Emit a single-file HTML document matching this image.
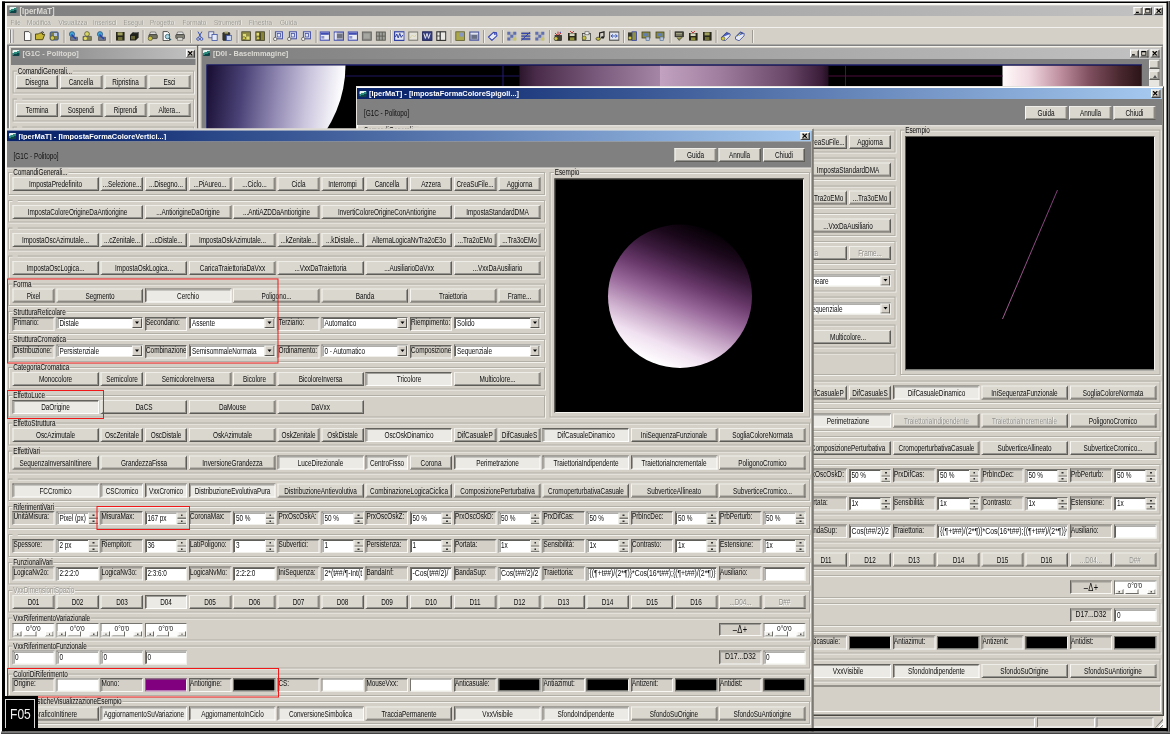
<!DOCTYPE html>
<html><head><meta charset="utf-8"><title>IperMaT</title><style>
html,body{margin:0;padding:0;background:#fff;}
body{width:1170px;height:734px;position:relative;overflow:hidden;font-family:"Liberation Sans",sans-serif;font-size:17px;color:#0c0c0c;}
div,i,b,span{box-sizing:border-box}
#c{position:absolute;left:0;top:0;width:1170px;height:734px;overflow:hidden}
#w{position:absolute;left:0;top:0;width:2340px;height:1468px;transform:scale(.5);transform-origin:0 0;filter:blur(1.1px)}
#w>div{position:absolute;white-space:nowrap}
i,b{display:block;font-style:normal;font-weight:normal}
.t{display:inline-block;transform:scaleX(.755);transform-origin:50% 50%;letter-spacing:-0.1px}
.b{background:#dad7cf;text-align:center;line-height:25.2px;border:2px solid;border-color:#eeede8 #5e5c56 #5e5c56 #f6f5f0;box-shadow:inset -2px -2px 0 #96948e;overflow:hidden}
.b .t{position:absolute;left:50%;top:0;transform:translateX(-50%) scaleX(.755)}
.bp{background:#eceae5;border-color:#64625c #fdfdfb #fdfdfb #64625c;box-shadow:inset 2px 2px 0 #a09e98;line-height:26.8px}
.bd{color:#8e8c86;text-shadow:1.2px 1.2px 0 #fff}
.l{background:#d4d0c8;border:2px solid;border-color:#66645e #f8f7f3 #f8f7f3 #66645e;box-shadow:inset 2px 2px 0 #9c9a94;line-height:18.8px;padding-left:0;overflow:hidden}
.l .t,.e .t,.gl .t,.hd .t{transform-origin:0 50%}
.lc{text-align:center}
.lc .t{transform-origin:50% 50%}
.e{background:#fff;border:2px solid;border-color:#76746e #f0efea #f0efea #76746e;box-shadow:inset 2px 2px 0 #605e58;line-height:21.2px;padding-left:3.6px;overflow:hidden}
.dd{position:absolute;right:0;top:0;width:19.6px;bottom:0;background:#d4d0c8;border:2px solid;border-color:#f4f3ee #55534e #55534e #f4f3ee}
.dd:after{content:"";position:absolute;left:4px;top:5.6px;border:4.4px solid transparent;border-top:5.2px solid #000;border-bottom:0}
.sp{position:absolute;right:0;top:0;width:19.2px;bottom:0;background:#d8d5cd;border-left:2px solid #f4f3ee}
.sp b{position:absolute;left:0;right:0;top:45%;height:2.4px;background:#77756f;box-shadow:0 10.8px 0 #77756f,0 2.4px 0 #f4f3ee}
.sp:before,.sp:after{content:"";position:absolute;left:6.8px;width:3.6px;height:2.8px;background:#333}
.sp:before{top:4px}.sp:after{bottom:4.4px}
.sw{border:2px solid;border-color:#76746e #f0efea #f0efea #76746e}
.sl{background:#fff;border:2px solid;border-color:#76746e #f0efea #f0efea #76746e;box-shadow:inset 2px 2px 0 #55534e;text-align:center;line-height:15.2px;overflow:hidden;box-shadow:none}
.sl .t{font-size:16px;transform:scaleX(.82);position:relative;top:0.2px}
.sb{position:absolute;left:0;right:0;bottom:0;height:10.8px;background:#fcfcfa}
.sb b{position:absolute;top:0;height:10.8px;background:#eeede8;border:2px solid;border-color:#fff #6e6c66 #6e6c66 #fff}
.sb .a1{left:0;width:16.8px}.sb .a2{right:0;width:16.8px}.sb .th{left:20px;width:26.8px;background:#fbfbf9}
.sb .a1:after,.sb .a2:after{content:"";position:absolute;left:5.2px;top:2.4px;width:2.8px;height:2.8px;background:#555}
.g{border:2px solid #b2afa7;box-shadow:2px 2px 0 #f2f1ec,inset 2px 2px 0 #f2f1ec;background:#d4d0c8}
.gl{position:absolute;left:6.8px;top:-8.8px;background:#d4d0c8;line-height:16px;padding:0 2px;height:16px;transform:scaleX(.75);transform-origin:0 50%}
.gl .t{transform:none!important}
.ge{width:14px;height:6px;top:-4px}
.gd{color:#9a9892;text-shadow:1.2px 1.2px 0 #fff}
.dlg{background:#d4d0c8;border:2px solid;border-color:#e4e2dc #48463f #48463f #e4e2dc;box-shadow:inset 2px 2px 0 #fff,inset -2px -2px 0 #8a8882}
.tb{background:linear-gradient(90deg,#0a246a 0,#0c276e 8%,#a6caf0 100%);overflow:hidden}
.itb{background:linear-gradient(90deg,#808080 0,#828282 6%,#c2c2c2 100%);overflow:hidden}
.tt{position:absolute;left:24px;top:0;line-height:21.2px;color:#fff;font-weight:bold;font-size:16px;transform:scaleX(.925);transform-origin:0 50%}
.ticon{position:absolute;left:4.8px;top:5.2px;width:14px;height:12px;background:linear-gradient(160deg,#e4f2ee 0 35%,#2a8a7c 36% 60%,#0c4448 61%);border-radius:2px}
.xb{position:absolute;right:2.8px;top:2.4px;width:18.8px;height:16.8px;background:#d4d0c8;border:2px solid;border-color:#fff #404040 #404040 #fff;box-shadow:inset -2px -2px 0 #8a8882}
.xb svg,.cb svg{position:absolute;left:0.4px;top:0.2px}
.cb{background:#d4d0c8;border:2px solid;border-color:#fff #404040 #404040 #fff;box-shadow:inset -2px -2px 0 #8a8882}
.hd{background:#808080}
.cv{background:#000;border:2px solid;border-color:#5a5852 #f4f3ee #f4f3ee #5a5852;overflow:hidden}
.ball{position:absolute;left:105.2px;top:90.4px;width:288px;height:287.2px;border-radius:50%;background:linear-gradient(22deg,#fff 11.6%,#f0e0f0 23.1%,#c8a8c8 34.6%,#9a6a9c 46.2%,#6a3a6c 57.7%,#3a1a3c 69.2%,#1a081a 79.2%,#050005 88.4%)}
.mn{color:#98968f;text-shadow:1.2px 1.2px 0 #f4f4f0;font-size:15.6px;line-height:18px}
.mn .t{transform-origin:0 50%;transform:scaleX(.835)}
.ic{border-radius:3px;opacity:.92}
</style></head><body><div id="c"><div id="w">
<div class="" style="left:9.6px;top:5.8px;width:2323.2px;height:1450.4px;background:#f8f7f3"></div>
<div class="" style="left:13.6px;top:10.8px;width:2312.8px;height:1446px;background:#d4d0c8"></div>
<div class="itb" style="left:14px;top:11.2px;width:2312px;height:21.2px;"><i class="ticon" style="left:4.8px;top:3.2px"></i><span class="tt" style="color:#dcdad4;left:25.2px;font-size:16.8px;transform:scaleX(.93)">[IperMaT]</span></div>
<div class="cb" style="left:2267.2px;top:13.6px;width:18px;height:16px;"><svg viewBox="0 0 8 7" width="12.8" height="11.2"><path d="M1.2 5.4H4.8" stroke="#000" stroke-width="1.5"/></svg></div>
<div class="cb" style="left:2286.4px;top:13.6px;width:18px;height:16px;"><svg viewBox="0 0 8 7" width="12.8" height="11.2"><path d="M1.4 1H6.6V6H1.4Z" stroke="#000" stroke-width=".9" fill="none"/><path d="M1.4 1.4H6.6" stroke="#000" stroke-width="1.5"/></svg></div>
<div class="cb" style="left:2308.4px;top:13.6px;width:18px;height:16px;"><svg viewBox="0 0 8 7" width="12.8" height="11.2"><path d="M1.4 0.9L6.6 6.1M6.6 0.9L1.4 6.1" stroke="#000" stroke-width="1.45"/></svg></div>
<div class="mn" style="left:21.4px;top:34.8px;width:80px;height:18px;"><span class="t" style="">File</span></div>
<div class="mn" style="left:54px;top:34.8px;width:80px;height:18px;"><span class="t" style="">Modifica</span></div>
<div class="mn" style="left:117px;top:34.8px;width:80px;height:18px;"><span class="t" style="">Visualizza</span></div>
<div class="mn" style="left:186px;top:34.8px;width:80px;height:18px;"><span class="t" style="">Inserisci</span></div>
<div class="mn" style="left:247.4px;top:34.8px;width:80px;height:18px;"><span class="t" style="">Esegui</span></div>
<div class="mn" style="left:300px;top:34.8px;width:80px;height:18px;"><span class="t" style="">Progetto</span></div>
<div class="mn" style="left:365.2px;top:34.8px;width:80px;height:18px;"><span class="t" style="">Formato</span></div>
<div class="mn" style="left:428px;top:34.8px;width:80px;height:18px;"><span class="t" style="">Strumenti</span></div>
<div class="mn" style="left:498px;top:34.8px;width:80px;height:18px;"><span class="t" style="">Finestra</span></div>
<div class="mn" style="left:560px;top:34.8px;width:80px;height:18px;"><span class="t" style="">Guida</span></div>
<div class="" style="left:14px;top:54px;width:2312px;height:2px;background:#fff;opacity:.7"></div>
<div class="" style="left:18.4px;top:59.2px;width:2px;height:26.8px;background:#fff;box-shadow:2px 0 0 #808080"></div>
<div class="" style="left:23.2px;top:59.2px;width:2px;height:26.8px;background:#fff;box-shadow:2px 0 0 #808080"></div>
<div class="" style="left:127.2px;top:60px;width:2px;height:26px;background:#8c8a84;box-shadow:2px 0 0 #f8f8f4;opacity:.75"></div>
<div class="" style="left:219.2px;top:60px;width:2px;height:26px;background:#8c8a84;box-shadow:2px 0 0 #f8f8f4;opacity:.75"></div>
<div class="" style="left:284.8px;top:60px;width:2px;height:26px;background:#8c8a84;box-shadow:2px 0 0 #f8f8f4;opacity:.75"></div>
<div class="" style="left:380px;top:60px;width:2px;height:26px;background:#8c8a84;box-shadow:2px 0 0 #f8f8f4;opacity:.75"></div>
<div class="" style="left:473px;top:60px;width:2px;height:26px;background:#8c8a84;box-shadow:2px 0 0 #f8f8f4;opacity:.75"></div>
<div class="" style="left:538px;top:60px;width:2px;height:26px;background:#8c8a84;box-shadow:2px 0 0 #f8f8f4;opacity:.75"></div>
<div class="" style="left:631.2px;top:60px;width:2px;height:26px;background:#8c8a84;box-shadow:2px 0 0 #f8f8f4;opacity:.75"></div>
<div class="" style="left:780px;top:60px;width:2px;height:26px;background:#8c8a84;box-shadow:2px 0 0 #f8f8f4;opacity:.75"></div>
<div class="" style="left:900.8px;top:60px;width:2px;height:26px;background:#8c8a84;box-shadow:2px 0 0 #f8f8f4;opacity:.75"></div>
<div class="" style="left:966px;top:60px;width:2px;height:26px;background:#8c8a84;box-shadow:2px 0 0 #f8f8f4;opacity:.75"></div>
<div class="" style="left:1004px;top:60px;width:2px;height:26px;background:#8c8a84;box-shadow:2px 0 0 #f8f8f4;opacity:.75"></div>
<div class="" style="left:1098px;top:60px;width:2px;height:26px;background:#8c8a84;box-shadow:2px 0 0 #f8f8f4;opacity:.75"></div>
<div class="" style="left:1246px;top:60px;width:2px;height:26px;background:#8c8a84;box-shadow:2px 0 0 #f8f8f4;opacity:.75"></div>
<div class="" style="left:1339.2px;top:60px;width:2px;height:26px;background:#8c8a84;box-shadow:2px 0 0 #f8f8f4;opacity:.75"></div>
<div class="" style="left:1431.2px;top:60px;width:2px;height:26px;background:#8c8a84;box-shadow:2px 0 0 #f8f8f4;opacity:.75"></div>
<div class="" style="left:1504px;top:60px;width:2px;height:26px;background:#8c8a84;box-shadow:2px 0 0 #f8f8f4;opacity:.75"></div>
<div style="left:44.8px;top:61.6px;width:21.2px;height:20.4px"><svg viewBox="0 0 10.6 10.2" width="21.2" height="20.4" style="display:block;opacity:.93"><path d="M2 .6h4.4l2 2v7H2z" fill="#fff" stroke="#333" stroke-width=".9"/></svg></div>
<div style="left:70px;top:61.6px;width:21.2px;height:20.4px"><svg viewBox="0 0 10.6 10.2" width="21.2" height="20.4" style="display:block;opacity:.93"><path d="M.5 3h3l1-1h3v1.5h2.2l-2 5.2H.5z" fill="#c4b428" stroke="#3a3400" stroke-width=".9"/><path d="M6 1.5l2-.8 1 1.6" stroke="#222" fill="none" stroke-width=".8"/></svg></div>
<div style="left:98px;top:61.6px;width:21.2px;height:20.4px"><svg viewBox="0 0 10.6 10.2" width="21.2" height="20.4" style="display:block;opacity:.93"><rect x="1.2" y="1" width="8" height="8" rx="1" fill="#7c7a34" stroke="#2c4a90" stroke-width="1"/><circle cx="3.4" cy="7" r="2.2" fill="#d0c838" stroke="#333" stroke-width=".6"/><rect x="5" y="2" width="3" height="3" fill="#b8c8e8"/></svg></div>
<div style="left:136px;top:61.6px;width:21.2px;height:20.4px"><svg viewBox="0 0 10.6 10.2" width="21.2" height="20.4" style="display:block;opacity:.93"><circle cx="4" cy="3.2" r="2.6" fill="#3aa0d8" stroke="#204870" stroke-width=".7"/><path d="M2.5 6.2h7v3.2h-7z" fill="#68708c" stroke="#333" stroke-width=".6"/><path d="M3.5 3.5l4.5 4.5" stroke="#1838b0" stroke-width="1.5"/></svg></div>
<div style="left:164px;top:61.6px;width:21.2px;height:20.4px"><svg viewBox="0 0 10.6 10.2" width="21.2" height="20.4" style="display:block;opacity:.93"><circle cx="5" cy="3" r="2.4" fill="#d8d860" stroke="#404020" stroke-width=".7"/><path d="M1 5.4h8.4v4h-8.4z" fill="#7c7c4c" stroke="#333" stroke-width=".6"/><circle cx="3.4" cy="7.4" r="1.6" fill="#e8e060"/></svg></div>
<div style="left:192px;top:61.6px;width:21.2px;height:20.4px"><svg viewBox="0 0 10.6 10.2" width="21.2" height="20.4" style="display:block;opacity:.93"><circle cx="4" cy="3.2" r="2.6" fill="#3aa0d8" stroke="#204870" stroke-width=".7"/><path d="M2.5 6.2h7v3.2h-7z" fill="#68708c" stroke="#333" stroke-width=".6"/><path d="M3.5 3.5l4.5 4.5" stroke="#1838b0" stroke-width="1.5"/></svg></div>
<div style="left:230px;top:61.6px;width:21.2px;height:20.4px"><svg viewBox="0 0 10.6 10.2" width="21.2" height="20.4" style="display:block;opacity:.93"><rect x="1" y="1" width="8.6" height="8.6" fill="#1c1c10"/><rect x="2.6" y="1.4" width="5" height="3" fill="#9c9c54"/><rect x="3" y="6" width="4.4" height="3.2" fill="#68682c"/></svg></div>
<div style="left:258px;top:61.6px;width:21.2px;height:20.4px"><svg viewBox="0 0 10.6 10.2" width="21.2" height="20.4" style="display:block;opacity:.93"><path d="M1 4l3-3h5.6v5.6l-3 3H1z" fill="#141410"/><path d="M2 5h4v3.4H2z" fill="#5c5c2c"/><path d="M4.4 1.6h4.4" stroke="#888" stroke-width=".8"/></svg></div>
<div style="left:295.2px;top:61.6px;width:21.2px;height:20.4px"><svg viewBox="0 0 10.6 10.2" width="21.2" height="20.4" style="display:block;opacity:.93"><path d="M3 1h5l1 2.6h-7z" fill="#e0e0e0" stroke="#444" stroke-width=".6"/><rect x="1.4" y="3.6" width="8.4" height="4" rx=".8" fill="#6c6c58" stroke="#222" stroke-width=".7"/><circle cx="2.8" cy="7.4" r="2.2" fill="#c8c030" stroke="#333" stroke-width=".6"/></svg></div>
<div style="left:323.2px;top:61.6px;width:21.2px;height:20.4px"><svg viewBox="0 0 10.6 10.2" width="21.2" height="20.4" style="display:block;opacity:.93"><path d="M1.6 .6h4.4l2 2v7H1.6z" fill="#fff" stroke="#333" stroke-width=".9"/><circle cx="6" cy="5.6" r="2.2" fill="#a8d8e8" stroke="#205060" stroke-width=".8"/><path d="M7.6 7.2l2 2" stroke="#205060" stroke-width="1.2"/></svg></div>
<div style="left:350px;top:61.6px;width:21.2px;height:20.4px"><svg viewBox="0 0 10.6 10.2" width="21.2" height="20.4" style="display:block;opacity:.93"><path d="M2.6 1h5l1 2.6h-7z" fill="#e8e8e8" stroke="#444" stroke-width=".6"/><rect x=".8" y="3.6" width="8.8" height="4" rx=".8" fill="#7c7c70" stroke="#222" stroke-width=".7"/><rect x="2.4" y="6.6" width="5.4" height="2.6" fill="#d8d8d0" stroke="#444" stroke-width=".5"/></svg></div>
<div style="left:391.2px;top:61.6px;width:21.2px;height:20.4px"><svg viewBox="0 0 10.6 10.2" width="21.2" height="20.4" style="display:block;opacity:.93"><path d="M2.4 .6l3.4 6M6.4 .6L3 6.6" stroke="#3048b0" stroke-width="1"/><circle cx="2.6" cy="8" r="1.4" fill="none" stroke="#3048b0" stroke-width=".9"/><circle cx="6" cy="8" r="1.4" fill="none" stroke="#3048b0" stroke-width=".9"/></svg></div>
<div style="left:416px;top:61.6px;width:21.2px;height:20.4px"><svg viewBox="0 0 10.6 10.2" width="21.2" height="20.4" style="display:block;opacity:.93"><rect x=".8" y=".8" width="5" height="6" fill="#e8ecf8" stroke="#404880" stroke-width=".8"/><rect x="4" y="3.4" width="5.2" height="6" fill="#e8ecf8" stroke="#3048a0" stroke-width=".8"/></svg></div>
<div style="left:444px;top:61.6px;width:21.2px;height:20.4px"><svg viewBox="0 0 10.6 10.2" width="21.2" height="20.4" style="display:block;opacity:.93"><rect x=".8" y="1.6" width="7" height="7.8" rx=".6" fill="#2c2c24" stroke="#111" stroke-width=".6"/><rect x="2.6" y=".6" width="3.4" height="2" fill="#a0a060"/><rect x="4.4" y="4.6" width="5" height="5" fill="#c8d4f0" stroke="#3048a0" stroke-width=".7"/></svg></div>
<div style="left:482px;top:61.6px;width:21.2px;height:20.4px"><svg viewBox="0 0 10.6 10.2" width="21.2" height="20.4" style="display:block;opacity:.93"><rect x=".8" y=".8" width="8.6" height="8.6" fill="#8c8838" stroke="#34341c" stroke-width=".8"/><path d="M2 3h3v3H2zM5.4 5.4h3v3h-3z" fill="#e0dc70"/><circle cx="3" cy="7.2" r="1.6" fill="#d8d040" stroke="#333" stroke-width=".5"/></svg></div>
<div style="left:510px;top:61.6px;width:21.2px;height:20.4px"><svg viewBox="0 0 10.6 10.2" width="21.2" height="20.4" style="display:block;opacity:.93"><rect x=".8" y=".8" width="8.6" height="8.6" fill="#84802c" stroke="#34341c" stroke-width=".8"/><path d="M5 1.4v7.6" stroke="#222" stroke-width="1.4"/><path d="M1.6 2h2.6v2.6H1.6z" fill="#e0dc70"/><circle cx="3" cy="7.2" r="1.6" fill="#d8d040" stroke="#333" stroke-width=".5"/></svg></div>
<div style="left:546px;top:61.6px;width:21.2px;height:20.4px"><svg viewBox="0 0 10.6 10.2" width="21.2" height="20.4" style="display:block;opacity:.93"><rect x="2.4" y=".8" width="7" height="7" fill="#e4e8f4" stroke="#3844a0" stroke-width="1"/><rect x="4.2" y="2.6" width="3.4" height="3.4" fill="none" stroke="#3844a0" stroke-width=".8"/><circle cx="2.2" cy="8" r="1.7" fill="#f4f4f4" stroke="#444" stroke-width=".7"/></svg></div>
<div style="left:574px;top:61.6px;width:21.2px;height:20.4px"><svg viewBox="0 0 10.6 10.2" width="21.2" height="20.4" style="display:block;opacity:.93"><rect x="2.4" y=".8" width="7" height="7" fill="#e4e8f4" stroke="#3844a0" stroke-width="1"/><rect x="4.2" y="2.6" width="3.4" height="3.4" fill="none" stroke="#3844a0" stroke-width=".8"/><circle cx="2.2" cy="8" r="1.7" fill="#f4f4f4" stroke="#444" stroke-width=".7"/></svg></div>
<div style="left:602px;top:61.6px;width:21.2px;height:20.4px"><svg viewBox="0 0 10.6 10.2" width="21.2" height="20.4" style="display:block;opacity:.93"><rect x="2.4" y=".8" width="7" height="7" fill="#e4e8f4" stroke="#3844a0" stroke-width="1"/><rect x="4.2" y="2.6" width="3.4" height="3.4" fill="none" stroke="#3844a0" stroke-width=".8"/><circle cx="2.2" cy="8" r="1.7" fill="#f4f4f4" stroke="#444" stroke-width=".7"/></svg></div>
<div style="left:639.2px;top:61.6px;width:21.2px;height:20.4px"><svg viewBox="0 0 10.6 10.2" width="21.2" height="20.4" style="display:block;opacity:.93"><rect x=".6" y="1" width="9.4" height="8.2" fill="#eceff8" stroke="#3844b0" stroke-width="1.1"/><rect x="1.2" y="1.6" width="8.2" height="2.2" fill="#3844b0"/><rect x="1.8" y="5" width="3" height="2.6" fill="#8890c8"/></svg></div>
<div style="left:667.2px;top:61.6px;width:21.2px;height:20.4px"><svg viewBox="0 0 10.6 10.2" width="21.2" height="20.4" style="display:block;opacity:.93"><rect x=".6" y="1" width="9.4" height="8.2" fill="#a4a8b8" stroke="#3844b0" stroke-width="1.1"/><rect x="3.4" y="3" width="5.6" height="4" fill="#686c7c"/><rect x="1.2" y="1.6" width="2" height="7" fill="#e8ecf8"/></svg></div>
<div style="left:695.2px;top:61.6px;width:21.2px;height:20.4px"><svg viewBox="0 0 10.6 10.2" width="21.2" height="20.4" style="display:block;opacity:.93"><rect x=".6" y="1" width="9.4" height="8.2" fill="#eceff8" stroke="#3844b0" stroke-width="1.1"/><rect x="1.2" y="1.6" width="8.2" height="2.2" fill="#3844b0"/><rect x="1.8" y="5" width="3" height="2.6" fill="#8890c8"/></svg></div>
<div style="left:723.2px;top:61.6px;width:21.2px;height:20.4px"><svg viewBox="0 0 10.6 10.2" width="21.2" height="20.4" style="display:block;opacity:.93"><rect x=".8" y="1" width="9" height="8.2" fill="#8c8c88" stroke="#5c5c58" stroke-width="1"/><rect x="2.4" y="2.6" width="5.8" height="5" fill="#a4a4a0"/></svg></div>
<div style="left:751.2px;top:61.6px;width:21.2px;height:20.4px"><svg viewBox="0 0 10.6 10.2" width="21.2" height="20.4" style="display:block;opacity:.93"><rect x=".8" y="1" width="9" height="8.2" fill="#9c9c98" stroke="#54544c" stroke-width="1"/><path d="M.8 5.1h9M3.8 1v8.2M6.8 1v8.2" stroke="#54544c" stroke-width=".9"/></svg></div>
<div style="left:788px;top:61.6px;width:21.2px;height:20.4px"><svg viewBox="0 0 10.6 10.2" width="21.2" height="20.4" style="display:block;opacity:.93"><rect x=".6" y=".8" width="9.6" height="8.6" fill="#e4e8f4" stroke="#2838a0" stroke-width="1.2"/><path d="M1.4 6l1.4-3 1.4 4 1.6-4.6 1.4 4 1.6-2.4" stroke="#2838a0" stroke-width="1" fill="none"/></svg></div>
<div style="left:816px;top:61.6px;width:21.2px;height:20.4px"><svg viewBox="0 0 10.6 10.2" width="21.2" height="20.4" style="display:block;opacity:.93"><rect x=".8" y="1" width="9" height="8.2" fill="#e8e6dc" stroke="#6c6c64" stroke-width="1"/><path d="M2 7l2.4-3 2 2 1.8-2.4" stroke="#d8d4a0" stroke-width="1" fill="none"/></svg></div>
<div style="left:844px;top:61.6px;width:21.2px;height:20.4px"><svg viewBox="0 0 10.6 10.2" width="21.2" height="20.4" style="display:block;opacity:.93"><rect x=".6" y=".8" width="9.6" height="8.6" fill="#28347c" stroke="#181c50" stroke-width="1"/><path d="M1.8 2.4l1.6 5 1.6-5 1.6 5 1.6-5" stroke="#e8e8f0" stroke-width="1" fill="none"/></svg></div>
<div style="left:872px;top:61.6px;width:21.2px;height:20.4px"><svg viewBox="0 0 10.6 10.2" width="21.2" height="20.4" style="display:block;opacity:.93"><rect x=".8" y=".8" width="9" height="8.6" fill="#ecebe6" stroke="#222" stroke-width="1.1"/><path d="M4.2 .8v8.6" stroke="#222" stroke-width="1.2"/><path d="M.8 5h3.4" stroke="#222" stroke-width=".7"/></svg></div>
<div style="left:910px;top:61.6px;width:21.2px;height:20.4px"><svg viewBox="0 0 10.6 10.2" width="21.2" height="20.4" style="display:block;opacity:.93"><rect x=".8" y=".8" width="8.6" height="8.6" fill="#a8a444" stroke="#54541c" stroke-width=".8"/><rect x="4.6" y="1.6" width="4" height="4" fill="#8494c0"/></svg></div>
<div style="left:938px;top:61.6px;width:21.2px;height:20.4px"><svg viewBox="0 0 10.6 10.2" width="21.2" height="20.4" style="display:block;opacity:.93"><rect x=".8" y="1" width="9" height="8.2" fill="#a0a4b4" stroke="#4450a0" stroke-width="1.1"/><rect x="2.6" y="4" width="5.4" height="3.8" fill="#606880"/><rect x="1.6" y="1.8" width="7.4" height="1.6" fill="#dfe3f4"/></svg></div>
<div style="left:975.2px;top:61.6px;width:21.2px;height:20.4px"><svg viewBox="0 0 10.6 10.2" width="21.2" height="20.4" style="display:block;opacity:.93"><path d="M1 6l5-4.6 3 .4.4 3L4.4 9.4z" fill="#e8ecf8" stroke="#2c3cb0" stroke-width="1.1"/><circle cx="7.4" cy="3" r=".9" fill="#2c3cb0"/></svg></div>
<div style="left:1012.8px;top:61.6px;width:21.2px;height:20.4px"><svg viewBox="0 0 10.6 10.2" width="21.2" height="20.4" style="display:block;opacity:.93"><rect x=".8" y=".8" width="9" height="8.8" fill="#bcbcb8"/><path d="M.8 .8h3v3h-3zM6.8 .8h3v3h-3zM3.8 3.8h3v3h-3zM.8 6.6h3v3h-3z" fill="#5868b0"/><path d="M6.8 6.6h3v3h-3z" fill="#c8c460"/></svg></div>
<div style="left:1040.8px;top:61.6px;width:21.2px;height:20.4px"><svg viewBox="0 0 10.6 10.2" width="21.2" height="20.4" style="display:block;opacity:.93"><rect x=".8" y=".8" width="9" height="8.8" fill="#a4a4a0"/><path d="M.8 2.4h9M.8 5.2h9M.8 8h9" stroke="#2c3ca8" stroke-width="1.3"/><path d="M1 9.4L9.6 1" stroke="#2c3ca8" stroke-width="1"/></svg></div>
<div style="left:1068.8px;top:61.6px;width:21.2px;height:20.4px"><svg viewBox="0 0 10.6 10.2" width="21.2" height="20.4" style="display:block;opacity:.93"><rect x=".8" y=".8" width="9" height="8.8" fill="#bcbcb8"/><path d="M.8 .8h3v3h-3zM6.8 .8h3v3h-3zM3.8 3.8h3v3h-3zM.8 6.6h3v3h-3z" fill="#5868b0"/><path d="M6.8 6.6h3v3h-3z" fill="#c8c460"/></svg></div>
<div style="left:1106px;top:61.6px;width:21.2px;height:20.4px"><svg viewBox="0 0 10.6 10.2" width="21.2" height="20.4" style="display:block;opacity:.93"><path d="M2 2l3 3 3-3M5 .6v4" stroke="#c02828" stroke-width="1" fill="none"/><rect x="2" y="4.4" width="6.6" height="5.2" fill="#38382c" stroke="#111" stroke-width=".6"/><circle cx="3" cy="7.6" r="1.9" fill="#d0c838" stroke="#333" stroke-width=".6"/><path d="M6.4 2l1.6-1" stroke="#2838a8" stroke-width="1"/></svg></div>
<div style="left:1134px;top:61.6px;width:21.2px;height:20.4px"><svg viewBox="0 0 10.6 10.2" width="21.2" height="20.4" style="display:block;opacity:.93"><rect x="1" y="2" width="8.6" height="7.6" fill="#1c1c10"/><rect x="2.6" y="2.4" width="5" height="2.6" fill="#d8d8c0"/><rect x="3" y="6.4" width="4.4" height="3" fill="#8c8c30"/><path d="M3 0l2 2 2-2" stroke="#c03030" stroke-width="1" fill="none"/></svg></div>
<div style="left:1162px;top:61.6px;width:21.2px;height:20.4px"><svg viewBox="0 0 10.6 10.2" width="21.2" height="20.4" style="display:block;opacity:.93"><rect x="1.4" y="2.4" width="8.2" height="7" fill="#dcdcd0" stroke="#333" stroke-width=".8"/><rect x="4" y=".8" width="4" height="3" fill="#f4f4f4" stroke="#444" stroke-width=".6"/><circle cx="3.2" cy="7" r="2" fill="#c8c030" stroke="#333" stroke-width=".6"/></svg></div>
<div style="left:1190px;top:61.6px;width:21.2px;height:20.4px"><svg viewBox="0 0 10.6 10.2" width="21.2" height="20.4" style="display:block;opacity:.93"><path d="M4.6 7.6V2l4.4-1.2V6" stroke="#111" stroke-width="1.2" fill="none"/><ellipse cx="3.2" cy="7.8" rx="2.2" ry="1.6" fill="#c8c030" stroke="#222" stroke-width=".7"/><ellipse cx="7.6" cy="6.4" rx="1.6" ry="1.2" fill="#111"/></svg></div>
<div style="left:1218px;top:61.6px;width:21.2px;height:20.4px"><svg viewBox="0 0 10.6 10.2" width="21.2" height="20.4" style="display:block;opacity:.93"><rect x=".6" y="1" width="9.4" height="8.2" fill="#e4e8f4" stroke="#333" stroke-width="1"/><path d="M2 5h6M4 3.4l-2 1.6 2 1.6M6.4 3.4l2 1.6-2 1.6" stroke="#2848b0" stroke-width=".9" fill="none"/></svg></div>
<div style="left:1254px;top:61.6px;width:21.2px;height:20.4px"><svg viewBox="0 0 10.6 10.2" width="21.2" height="20.4" style="display:block;opacity:.93"><rect x="1" y="1.4" width="4.6" height="8" fill="#2c2c20"/><rect x="5" y=".8" width="4.6" height="8.6" fill="#8c8c34" stroke="#2838a0" stroke-width=".8"/><circle cx="3" cy="7" r="1.8" fill="#d0c838" stroke="#333" stroke-width=".5"/></svg></div>
<div style="left:1282px;top:61.6px;width:21.2px;height:20.4px"><svg viewBox="0 0 10.6 10.2" width="21.2" height="20.4" style="display:block;opacity:.93"><rect x="1" y="1" width="8" height="6" fill="#8c8c30" stroke="#34341c" stroke-width=".8"/><rect x="2.4" y="2.2" width="5" height="3" fill="#5878b0"/><rect x="5" y="6" width="3.4" height="3.6" fill="#b8c4d8" stroke="#406090" stroke-width=".6"/></svg></div>
<div style="left:1310px;top:61.6px;width:21.2px;height:20.4px"><svg viewBox="0 0 10.6 10.2" width="21.2" height="20.4" style="display:block;opacity:.93"><rect x="1" y="1" width="8" height="6" fill="#8c8c30" stroke="#34341c" stroke-width=".8"/><rect x="2.4" y="2.2" width="5" height="3" fill="#5878b0"/><rect x="5" y="6" width="3.4" height="3.6" fill="#b8c4d8" stroke="#406090" stroke-width=".6"/></svg></div>
<div style="left:1348px;top:61.6px;width:21.2px;height:20.4px"><svg viewBox="0 0 10.6 10.2" width="21.2" height="20.4" style="display:block;opacity:.93"><rect x="1" y=".8" width="8.6" height="5" fill="#3c3c30" stroke="#111" stroke-width=".6"/><path d="M2 2.4h6M2 4h6" stroke="#c8c8a0" stroke-width=".8"/><path d="M3 6.4l2 3 3.6-3.4" fill="#8c8c34" stroke="#333" stroke-width=".7"/></svg></div>
<div style="left:1376px;top:61.6px;width:21.2px;height:20.4px"><svg viewBox="0 0 10.6 10.2" width="21.2" height="20.4" style="display:block;opacity:.93"><rect x="1" y="2" width="8.6" height="7.6" fill="#1c1c10"/><rect x="2.6" y="2.4" width="5" height="2.6" fill="#d8d8c0"/><rect x="3" y="6.4" width="4.4" height="3" fill="#8c8c30"/><path d="M3 0l2 2 2-2" stroke="#c03030" stroke-width="1" fill="none"/></svg></div>
<div style="left:1404px;top:61.6px;width:21.2px;height:20.4px"><svg viewBox="0 0 10.6 10.2" width="21.2" height="20.4" style="display:block;opacity:.93"><rect x="1" y="1" width="8.6" height="8.6" fill="#1c1c10"/><rect x="2.6" y="1.4" width="5" height="3" fill="#9c9c54"/><rect x="3" y="6" width="4.4" height="3.2" fill="#68682c"/></svg></div>
<div style="left:1440.8px;top:61.6px;width:21.2px;height:20.4px"><svg viewBox="0 0 10.6 10.2" width="21.2" height="20.4" style="display:block;opacity:.93"><path d="M1 6.4l5-5 3.6 1.6-5 5z" fill="#4058c0" stroke="#182880" stroke-width=".8"/><path d="M1 6.4v1.8l3.6 1.6 5-5V3" fill="#e8ecf8" stroke="#182880" stroke-width=".7"/><circle cx="2.6" cy="7.6" r="1.8" fill="#d0c838" stroke="#333" stroke-width=".5"/></svg></div>
<div style="left:1468.8px;top:61.6px;width:21.2px;height:20.4px"><svg viewBox="0 0 10.6 10.2" width="21.2" height="20.4" style="display:block;opacity:.93"><path d="M1 6l5-5 3.6 1.6-5 5z" fill="#4058c0" stroke="#182880" stroke-width=".8"/><path d="M1 6v2.2l3.6 1.6 5-5V2.6" fill="#e8ecf8" stroke="#182880" stroke-width=".7"/><path d="M3 5.4l3-3" stroke="#d8d860" stroke-width="1"/></svg></div>
<div class="" style="left:14px;top:88.8px;width:2312px;height:1343.2px;background:#808080"></div>
<div class="" style="left:14px;top:1432px;width:2312px;height:25.2px;background:#d4d0c8"></div>
<div class="" style="left:18px;top:1435.2px;width:2052px;height:20px;border:2px solid;border-color:#808080 #fff #fff #808080"></div>
<div class="" style="left:2074px;top:1435.2px;width:116px;height:20px;border:2px solid;border-color:#808080 #fff #fff #808080"></div>
<div class="" style="left:2193.2px;top:1435.2px;width:114px;height:20px;border:2px solid;border-color:#808080 #fff #fff #808080"></div>
<div class="" style="left:2310px;top:1436.8px;width:16px;height:18.8px;background:repeating-linear-gradient(135deg,transparent 0 3.2px,#fff 3.2px 4.8px,#808080 4.8px 7.2px);clip-path:polygon(100% 0,100% 100%,0 100%)"></div>
<div class="" style="left:18px;top:92px;width:375.6px;height:180px;background:#d4d0c8;border:2px solid;border-color:#f4f3ee #d4d0c8 #606060 #f4f3ee"></div>
<div class="" style="left:394.8px;top:90px;width:2.4px;height:180px;background:#4c4a46"></div>
<div class="itb" style="left:22px;top:96px;width:368.8px;height:22px;"><i class="ticon" style="left:3.2px;top:4px"></i><span class="tt" style="color:#dcdad4;left:22.8px">[G1C - Politopo]</span></div>
<div class="cb" style="left:371.6px;top:98.8px;width:18px;height:16px;"><svg viewBox="0 0 8 7" width="12.8" height="11.2"><path d="M1.4 0.9L6.6 6.1M6.6 0.9L1.4 6.1" stroke="#000" stroke-width="1.45"/></svg></div>
<div class="" style="left:22px;top:118px;width:368.8px;height:12px;background:#808080"></div>
<div class="g" style="left:24.8px;top:141.2px;width:363.2px;height:45.6px;"><span class="gl"><span class="t" style="">ComandiGenerali...</span></span></div>
<div class="b" style="left:32px;top:150.4px;width:84.4px;height:27.8px;"><span class="t" style="">Disegna</span></div>
<div class="b" style="left:120.2px;top:150.4px;width:84.4px;height:27.8px;"><span class="t" style="">Cancella</span></div>
<div class="b" style="left:208.6px;top:150.4px;width:84.4px;height:27.8px;"><span class="t" style="">Ripristina</span></div>
<div class="b" style="left:296.8px;top:150.4px;width:84.4px;height:27.8px;"><span class="t" style="">Esci</span></div>
<div class="g" style="left:24.8px;top:197px;width:363.2px;height:45.6px;"><span class="gl ge"></span></div>
<div class="b" style="left:32px;top:206.2px;width:84.4px;height:27.8px;"><span class="t" style="">Termina</span></div>
<div class="b" style="left:120.2px;top:206.2px;width:84.4px;height:27.8px;"><span class="t" style="">Sospendi</span></div>
<div class="b" style="left:208.6px;top:206.2px;width:84.4px;height:27.8px;"><span class="t" style="">Riprendi</span></div>
<div class="b" style="left:296.8px;top:206.2px;width:84.4px;height:27.8px;"><span class="t" style="">Altera...</span></div>
<div class="g" style="left:24.8px;top:252.6px;width:363.2px;height:45.6px;"><span class="gl ge"></span></div>
<div class="" style="left:397.2px;top:92px;width:1928px;height:200px;background:#d4d0c8;border:2px solid;border-color:#f4f3ee #606060 #606060 #f4f3ee"></div>
<div class="itb" style="left:403.2px;top:96px;width:1918px;height:22px;"><i class="ticon" style="left:3.2px;top:4px"></i><span class="tt" style="color:#dcdad4;left:23.2px">[D0I - BaseImmagine]</span></div>
<div class="cb" style="left:2259.6px;top:98.8px;width:18px;height:16px;"><svg viewBox="0 0 8 7" width="12.8" height="11.2"><path d="M1.2 5.4H4.8" stroke="#000" stroke-width="1.5"/></svg></div>
<div class="cb" style="left:2278.8px;top:98.8px;width:18px;height:16px;"><svg viewBox="0 0 8 7" width="12.8" height="11.2"><path d="M1.4 1H6.6V6H1.4Z" stroke="#000" stroke-width=".9" fill="none"/><path d="M1.4 1.4H6.6" stroke="#000" stroke-width="1.5"/></svg></div>
<div class="cb" style="left:2300.8px;top:98.8px;width:18px;height:16px;"><svg viewBox="0 0 8 7" width="12.8" height="11.2"><path d="M1.4 0.9L6.6 6.1M6.6 0.9L1.4 6.1" stroke="#000" stroke-width="1.45"/></svg></div>
<div class="" style="left:403.2px;top:118px;width:1918px;height:160px;background:#808080"></div>
<div class="" style="left:413.2px;top:129.2px;width:1870.8px;height:140px;background:#000;border:2px solid #2a2a9a;overflow:hidden"><i style="position:absolute;left:-206.2px;top:-242.2px;width:482px;height:482px;border-radius:50%;background:linear-gradient(97deg,#1c1238 44.8%,#4a4276 57.3%,#8e86b0 69.7%,#ccc6de 82.2%,#fff 94.7%)"></i><i style="position:absolute;left:623.6px;top:0;width:282px;height:60px;background:linear-gradient(90deg,#2c162c,#4a2c4a 12%,#7a5a7c 55%,#a686a6)"></i><i style="position:absolute;left:905.2px;top:0;width:336.8px;height:60px;background:linear-gradient(90deg,#c2a2c0,#a07ea0 35%,#6a486a 75%,#3a1c38 96%,#221022)"></i><i style="position:absolute;left:1590px;top:0;width:278.8px;height:60px;background:linear-gradient(90deg,#fffafa,#f0d8e0 19%,#c090a0 41%,#805060 62%,#4a2830 84%,#2a1418)"></i><i style="position:absolute;left:276px;top:20px;width:348px;height:2px;background:#1e1660"></i><i style="position:absolute;left:1242px;top:20px;width:348px;height:2px;background:#4c0c3c"></i><i style="position:absolute;left:590px;top:0;width:2px;height:60px;background:#241a78"></i><i style="position:absolute;left:1275.2px;top:0;width:2px;height:60px;background:#560e48"></i></div>
<div class="" style="left:2298px;top:119.2px;width:20.8px;height:160px;background:#e8e6e0"></div>
<div class="b" style="left:2298px;top:120px;width:20.8px;height:18px;"></div>
<div class="b" style="left:2298px;top:142px;width:20.8px;height:18px;"><i style="position:absolute;left:6px;top:6px;border:4px solid transparent;border-top:0;border-bottom:6px solid #555"></i></div>
<div class="dlg" style="left:711.6px;top:172px;width:1616.4px;height:1260.4px;"></div>
<div class="tb" style="left:714.4px;top:176.4px;width:1609.2px;height:22px;"><i class="ticon"></i><span class="tt">[IperMaT] - [ImpostaFormaColoreSpigoli...]</span><i class="xb"><svg viewBox="0 0 8 7" width="12.8" height="11.2"><path d="M1.4 0.9L6.6 6.1M6.6 0.9L1.4 6.1" stroke="#000" stroke-width="1.45"/></svg></i></div>
<div class="hd" style="left:714.4px;top:198.4px;width:1609.2px;height:52px;"><span class="t" style="position:absolute;left:14px;top:18.8px;color:#101010">[G1C - Politopo]</span></div>
<div class="b" style="left:2050px;top:211.6px;width:84.6px;height:28px;"><span class="t" style="">Guida</span></div>
<div class="b" style="left:2138.4px;top:211.6px;width:84.6px;height:28px;"><span class="t" style="">Annulla</span></div>
<div class="b" style="left:2226.8px;top:211.6px;width:84.6px;height:28px;"><span class="t" style="">Chiudi</span></div>
<div class="" style="left:714.4px;top:250.4px;width:1609.2px;height:2.4px;background:#fff;opacity:.35"></div>
<div class="g" style="left:717px;top:259.2px;width:1073.8px;height:45.6px;"><span class="gl"><span class="t" style="">ComandiGenerali...</span></span></div>
<div class="g" style="left:717px;top:314.8px;width:1073.8px;height:45.6px;"><span class="gl ge"></span></div>
<div class="g" style="left:717px;top:370.6px;width:1073.8px;height:45.6px;"><span class="gl ge"></span></div>
<div class="g" style="left:717px;top:426.4px;width:1073.8px;height:45.6px;"><span class="gl ge"></span></div>
<div class="g" style="left:717px;top:482px;width:1073.8px;height:45.6px;"><span class="gl"><span class="t" style="">Forma</span></span></div>
<div class="g" style="left:717px;top:537.8px;width:1073.8px;height:45.6px;"><span class="gl"><span class="t" style="">StrutturaReticolare</span></span></div>
<div class="g" style="left:717px;top:593.4px;width:1073.8px;height:45.6px;"><span class="gl"><span class="t" style="">StrutturaCromatica</span></span></div>
<div class="g" style="left:717px;top:649.2px;width:1073.8px;height:45.6px;"><span class="gl"><span class="t" style="">CategoriaCromatica</span></span></div>
<div class="g" style="left:717px;top:704.8px;width:1073.8px;height:45.6px;"><span class="gl"><span class="t" style="">EffettoLuce</span></span></div>
<div class="g" style="left:717px;top:760.6px;width:1603.8px;height:45.6px;"><span class="gl"><span class="t" style="">EffettoStruttura</span></span></div>
<div class="g" style="left:717px;top:816.2px;width:1603.8px;height:45.6px;"><span class="gl"><span class="t" style="">EffettiVari</span></span></div>
<div class="g" style="left:717px;top:872px;width:1603.8px;height:45.6px;"><span class="gl ge"></span></div>
<div class="g" style="left:717px;top:927.6px;width:1603.8px;height:45.6px;"><span class="gl"><span class="t" style="">RiferimentiVari</span></span></div>
<div class="g" style="left:717px;top:983.4px;width:1603.8px;height:45.6px;"><span class="gl ge"></span></div>
<div class="g" style="left:717px;top:1039px;width:1603.8px;height:45.6px;"><span class="gl"><span class="t" style="">FunzionaliVari</span></span></div>
<div class="g" style="left:717px;top:1094.8px;width:1603.8px;height:45.6px;"><span class="gl gd"><span class="t" style="">VxxDimensioniSpazio</span></span></div>
<div class="g" style="left:717px;top:1150.4px;width:1603.8px;height:45.6px;"><span class="gl"><span class="t" style="">VxxRiferimentoVariazionale</span></span></div>
<div class="g" style="left:717px;top:1206.2px;width:1603.8px;height:45.6px;"><span class="gl"><span class="t" style="">VxxRiferimentoFunzionale</span></span></div>
<div class="g" style="left:717px;top:1261.8px;width:1603.8px;height:45.6px;"><span class="gl"><span class="t" style="">ColoriDiRiferimento</span></span></div>
<div class="g" style="left:717px;top:1317.4px;width:1603.8px;height:45.6px;"><span class="gl"><span class="t" style="">CaratteristicheVisualizzazioneEsempio</span></span></div>
<div class="g" style="left:1800px;top:259.2px;width:520.8px;height:491.2px;"><span class="gl"><span class="t" style="">Esempio</span></span></div>
<div class="cv" style="left:1810.4px;top:272px;width:499.2px;height:469.2px;"><svg width="500" height="470" viewBox="0 0 250 235" style="position:absolute;left:0;top:0"><defs><linearGradient id="lg" x1="0" y1="1" x2="0" y2="0"><stop offset="0" stop-color="#b468a4"/><stop offset="1" stop-color="#8c4484"/></linearGradient></defs><path d="M96.5 182L151.5 53" stroke="url(#lg)" stroke-width=".9" fill="none"/></svg></div>
<div class="b" style="left:725.8px;top:269.6px;width:173px;height:28px;"><span class="t" style="">ImpostaPredefinito</span></div>
<div class="b" style="left:902.6px;top:269.6px;width:84.6px;height:28px;"><span class="t" style="">...Selezione...</span></div>
<div class="b" style="left:990.8px;top:269.6px;width:84.6px;height:28px;"><span class="t" style="">...Disegno...</span></div>
<div class="b" style="left:1079.2px;top:269.6px;width:84.6px;height:28px;"><span class="t" style="">...PiAureo...</span></div>
<div class="b" style="left:1167.6px;top:269.6px;width:84.6px;height:28px;"><span class="t" style="">...Ciclo...</span></div>
<div class="b" style="left:1256px;top:269.6px;width:84.6px;height:28px;"><span class="t" style="">Cicla</span></div>
<div class="b" style="left:1344.4px;top:269.6px;width:84.6px;height:28px;"><span class="t" style="">Interrompi</span></div>
<div class="b" style="left:1432.6px;top:269.6px;width:84.6px;height:28px;"><span class="t" style="">Cancella</span></div>
<div class="b" style="left:1521px;top:269.6px;width:84.6px;height:28px;"><span class="t" style="">Azzera</span></div>
<div class="b" style="left:1609.4px;top:269.6px;width:84.6px;height:28px;"><span class="t" style="">CreaSuFile...</span></div>
<div class="b" style="left:1697.8px;top:269.6px;width:84.6px;height:28px;"><span class="t" style="">Aggiorna</span></div>
<div class="b" style="left:725.8px;top:325.2px;width:261.2px;height:28px;"><span class="t" style="">ImpostaColoreOrigineDaAntiorigine</span></div>
<div class="b" style="left:990.8px;top:325.2px;width:173px;height:28px;"><span class="t" style="">...AntiorigineDaOrigine</span></div>
<div class="b" style="left:1167.6px;top:325.2px;width:173px;height:28px;"><span class="t" style="">...AntiAZDDaAntiorigine</span></div>
<div class="b" style="left:1344.4px;top:325.2px;width:261.2px;height:28px;"><span class="t" style="">InvertiColoreOrigineConAntiorigine</span></div>
<div class="b" style="left:1609.4px;top:325.2px;width:173px;height:28px;"><span class="t" style="">ImpostaStandardDMA</span></div>
<div class="b" style="left:725.8px;top:381px;width:173px;height:28px;"><span class="t" style="">ImpostaOscAzimutale...</span></div>
<div class="b" style="left:902.6px;top:381px;width:84.6px;height:28px;"><span class="t" style="">...cZenitale...</span></div>
<div class="b" style="left:990.8px;top:381px;width:84.6px;height:28px;"><span class="t" style="">...cDistale...</span></div>
<div class="b" style="left:1079.2px;top:381px;width:173px;height:28px;"><span class="t" style="">ImpostaOskAzimutale...</span></div>
<div class="b" style="left:1256px;top:381px;width:84.6px;height:28px;"><span class="t" style="">...kZenitale...</span></div>
<div class="b" style="left:1344.4px;top:381px;width:84.6px;height:28px;"><span class="t" style="">...kDistale...</span></div>
<div class="b" style="left:1432.6px;top:381px;width:173px;height:28px;"><span class="t" style="">AlternaLogicaNvTra2oE3o</span></div>
<div class="b" style="left:1609.4px;top:381px;width:84.6px;height:28px;"><span class="t" style="">...Tra2oEMo</span></div>
<div class="b" style="left:1697.8px;top:381px;width:84.6px;height:28px;"><span class="t" style="">...Tra3oEMo</span></div>
<div class="b" style="left:725.8px;top:436.6px;width:173px;height:28px;"><span class="t" style="">ImpostaOscLogica...</span></div>
<div class="b" style="left:902.6px;top:436.6px;width:173px;height:28px;"><span class="t" style="">ImpostaOskLogica...</span></div>
<div class="b" style="left:1079.2px;top:436.6px;width:173px;height:28px;"><span class="t" style="">CaricaTraiettoriaDaVxx</span></div>
<div class="b" style="left:1256px;top:436.6px;width:173px;height:28px;"><span class="t" style="">...VxxDaTraiettoria</span></div>
<div class="b" style="left:1432.6px;top:436.6px;width:173px;height:28px;"><span class="t" style="">...AusiliarioDaVxx</span></div>
<div class="b" style="left:1609.4px;top:436.6px;width:173px;height:28px;"><span class="t" style="">...VxxDaAusiliario</span></div>
<div class="b" style="left:725.8px;top:492.4px;width:84.6px;height:28px;"><span class="t" style="">Pixel</span></div>
<div class="b bp" style="left:814.2px;top:492.4px;width:173px;height:28px;"><span class="t" style="">Segmento</span></div>
<div class="b bd" style="left:990.8px;top:492.4px;width:173px;height:28px;"><span class="t" style="">Cerchio</span></div>
<div class="b bd" style="left:1167.6px;top:492.4px;width:173px;height:28px;"><span class="t" style="">Poligono...</span></div>
<div class="b bd" style="left:1344.4px;top:492.4px;width:173px;height:28px;"><span class="t" style="">Banda</span></div>
<div class="b bd" style="left:1521px;top:492.4px;width:173px;height:28px;"><span class="t" style="">Traiettoria</span></div>
<div class="b bd" style="left:1697.8px;top:492.4px;width:84.6px;height:28px;"><span class="t" style="">Frame...</span></div>
<div class="l" style="left:725.8px;top:549.2px;width:84.6px;height:27.8px;"><span class="t" style="">Primario:</span></div>
<div class="e" style="left:814.2px;top:548.8px;width:173px;height:24.4px;"><span class="t" style="">Distale</span><i class="dd"></i></div>
<div class="l" style="left:990.8px;top:549.2px;width:84.6px;height:27.8px;"><span class="t" style="">Secondario:</span></div>
<div class="e" style="left:1079.2px;top:548.8px;width:173px;height:24.4px;"><span class="t" style="">Assente</span><i class="dd"></i></div>
<div class="l" style="left:1256px;top:549.2px;width:84.6px;height:27.8px;"><span class="t" style="">Terziario:</span></div>
<div class="e" style="left:1344.4px;top:548.8px;width:173px;height:24.4px;"><span class="t" style="">Automatico</span><i class="dd"></i></div>
<div class="l" style="left:1521px;top:549.2px;width:84.6px;height:27.8px;"><span class="t" style="">Riempimento:</span></div>
<div class="e" style="left:1609.4px;top:548.8px;width:173px;height:24.4px;"><span class="t" style="">Lineare</span><i class="dd"></i></div>
<div class="l" style="left:725.8px;top:604.8px;width:84.6px;height:27.8px;"><span class="t" style="">Distribuzione:</span></div>
<div class="e" style="left:814.2px;top:604.6px;width:173px;height:24.4px;"><span class="t" style="">Persistenziale</span><i class="dd"></i></div>
<div class="l" style="left:990.8px;top:604.8px;width:84.6px;height:27.8px;"><span class="t" style="">Combinazione</span></div>
<div class="e" style="left:1079.2px;top:604.6px;width:173px;height:24.4px;"><span class="t" style="">SemisommaleNormata</span><i class="dd"></i></div>
<div class="l" style="left:1256px;top:604.8px;width:84.6px;height:27.8px;"><span class="t" style="">Ordinamento:</span></div>
<div class="e" style="left:1344.4px;top:604.6px;width:173px;height:24.4px;"><span class="t" style="">0 - Automatico</span><i class="dd"></i></div>
<div class="l" style="left:1521px;top:604.8px;width:84.6px;height:27.8px;"><span class="t" style="">Composizione</span></div>
<div class="e" style="left:1609.4px;top:604.6px;width:173px;height:24.4px;"><span class="t" style="">Sequenziale</span><i class="dd"></i></div>
<div class="b" style="left:725.8px;top:659.6px;width:173px;height:28px;"><span class="t" style="">Monocolore</span></div>
<div class="b" style="left:902.6px;top:659.6px;width:84.6px;height:28px;"><span class="t" style="">Semicolore</span></div>
<div class="b" style="left:990.8px;top:659.6px;width:173px;height:28px;"><span class="t" style="">SemicoloreInversa</span></div>
<div class="b" style="left:1167.6px;top:659.6px;width:84.6px;height:28px;"><span class="t" style="">Bicolore</span></div>
<div class="b" style="left:1256px;top:659.6px;width:173px;height:28px;"><span class="t" style="">BicoloreInversa</span></div>
<div class="b bp" style="left:1432.6px;top:659.6px;width:173px;height:28px;"><span class="t" style="">Tricolore</span></div>
<div class="b" style="left:1609.4px;top:659.6px;width:173px;height:28px;"><span class="t" style="">Multicolore...</span></div>
<div class="b" style="left:725.8px;top:771px;width:173px;height:28px;"><span class="t" style="">OscAzimutale</span></div>
<div class="b" style="left:902.6px;top:771px;width:84.6px;height:28px;"><span class="t" style="">OscZenitale</span></div>
<div class="b" style="left:990.8px;top:771px;width:84.6px;height:28px;"><span class="t" style="">OscDistale</span></div>
<div class="b" style="left:1079.2px;top:771px;width:173px;height:28px;"><span class="t" style="">OskAzimutale</span></div>
<div class="b" style="left:1256px;top:771px;width:84.6px;height:28px;"><span class="t" style="">OskZenitale</span></div>
<div class="b" style="left:1344.4px;top:771px;width:84.6px;height:28px;"><span class="t" style="">OskDistale</span></div>
<div class="b bp" style="left:1432.6px;top:771px;width:173px;height:28px;"><span class="t" style="">OscOskDinamico</span></div>
<div class="b" style="left:1609.4px;top:771px;width:84.6px;height:28px;"><span class="t" style="">DifCasualeP</span></div>
<div class="b" style="left:1697.8px;top:771px;width:84.6px;height:28px;"><span class="t" style="">DifCasualeS</span></div>
<div class="b bp" style="left:1786.2px;top:771px;width:173px;height:28px;"><span class="t" style="">DifCasualeDinamico</span></div>
<div class="b" style="left:1962.8px;top:771px;width:173px;height:28px;"><span class="t" style="">IniSequenzaFunzionale</span></div>
<div class="b" style="left:2139.6px;top:771px;width:173px;height:28px;"><span class="t" style="">SogliaColoreNormata</span></div>
<div class="b" style="left:725.8px;top:826.6px;width:173px;height:28px;"><span class="t" style="">SequenzaInversaInItinere</span></div>
<div class="b" style="left:902.6px;top:826.6px;width:173px;height:28px;"><span class="t" style="">GrandezzaFissa</span></div>
<div class="b" style="left:1079.2px;top:826.6px;width:173px;height:28px;"><span class="t" style="">InversioneGrandezza</span></div>
<div class="b bp" style="left:1256px;top:826.6px;width:173px;height:28px;"><span class="t" style="">LuceDirezionale</span></div>
<div class="b" style="left:1432.6px;top:826.6px;width:84.6px;height:28px;"><span class="t" style="">CentroFisso</span></div>
<div class="b" style="left:1521px;top:826.6px;width:84.6px;height:28px;"><span class="t" style="">Corona</span></div>
<div class="b bp" style="left:1609.4px;top:826.6px;width:173px;height:28px;"><span class="t" style="">Perimetrazione</span></div>
<div class="b bd" style="left:1786.2px;top:826.6px;width:173px;height:28px;"><span class="t" style="">TraiettoriaIndipendente</span></div>
<div class="b bd" style="left:1962.8px;top:826.6px;width:173px;height:28px;"><span class="t" style="">TraiettoriaIncrementale</span></div>
<div class="b" style="left:2139.6px;top:826.6px;width:173px;height:28px;"><span class="t" style="">PoligonoCromico</span></div>
<div class="b bp" style="left:725.8px;top:882.4px;width:173px;height:28px;"><span class="t" style="">FCCromico</span></div>
<div class="b bp" style="left:902.6px;top:882.4px;width:84.6px;height:28px;"><span class="t" style="">CSCromico</span></div>
<div class="b bp" style="left:990.8px;top:882.4px;width:84.6px;height:28px;"><span class="t" style="">VxxCromico</span></div>
<div class="b bp" style="left:1079.2px;top:882.4px;width:173px;height:28px;"><span class="t" style="">DistribuzioneEvolutivaPura</span></div>
<div class="b" style="left:1256px;top:882.4px;width:173px;height:28px;"><span class="t" style="">DistribuzioneAntievolutiva</span></div>
<div class="b" style="left:1432.6px;top:882.4px;width:173px;height:28px;"><span class="t" style="">CombinazioneLogicaCiclica</span></div>
<div class="b" style="left:1609.4px;top:882.4px;width:173px;height:28px;"><span class="t" style="">ComposizionePerturbativa</span></div>
<div class="b" style="left:1786.2px;top:882.4px;width:173px;height:28px;"><span class="t" style="">CromoperturbativaCasuale</span></div>
<div class="b" style="left:1962.8px;top:882.4px;width:173px;height:28px;"><span class="t" style="">SubverticeAllineato</span></div>
<div class="b" style="left:2139.6px;top:882.4px;width:173px;height:28px;"><span class="t" style="">SubverticeCromico...</span></div>
<div class="l" style="left:725.8px;top:937.2px;width:84.6px;height:27.8px;"><span class="t" style="">UnitàMisura:</span></div>
<div class="e" style="left:814.2px;top:938px;width:84.6px;height:27.6px;"><span class="t" style="">Pixel (px)</span><i class="sp"><b></b></i></div>
<div class="l" style="left:902.6px;top:937.2px;width:84.6px;height:27.8px;"><span class="t" style="">MisuraMax:</span></div>
<div class="e" style="left:990.8px;top:938px;width:84.6px;height:27.6px;"><span class="t" style="">167 px</span><i class="sp"><b></b></i></div>
<div class="l" style="left:1079.2px;top:937.2px;width:84.6px;height:27.8px;"><span class="t" style="">CoronaMax:</span></div>
<div class="e" style="left:1167.6px;top:938px;width:84.6px;height:27.6px;"><span class="t" style="">50 %</span><i class="sp"><b></b></i></div>
<div class="l" style="left:1256px;top:937.2px;width:84.6px;height:27.8px;"><span class="t" style="">PrxOscOskA:</span></div>
<div class="e" style="left:1344.4px;top:938px;width:84.6px;height:27.6px;"><span class="t" style="">50 %</span><i class="sp"><b></b></i></div>
<div class="l" style="left:1432.6px;top:937.2px;width:84.6px;height:27.8px;"><span class="t" style="">PrxOscOskZ:</span></div>
<div class="e" style="left:1521px;top:938px;width:84.6px;height:27.6px;"><span class="t" style="">50 %</span><i class="sp"><b></b></i></div>
<div class="l" style="left:1609.4px;top:937.2px;width:84.6px;height:27.8px;"><span class="t" style="">PrxOscOskD:</span></div>
<div class="e" style="left:1697.8px;top:938px;width:84.6px;height:27.6px;"><span class="t" style="">50 %</span><i class="sp"><b></b></i></div>
<div class="l" style="left:1786.2px;top:937.2px;width:84.6px;height:27.8px;"><span class="t" style="">PrxDifCas:</span></div>
<div class="e" style="left:1874.4px;top:938px;width:84.6px;height:27.6px;"><span class="t" style="">50 %</span><i class="sp"><b></b></i></div>
<div class="l" style="left:1962.8px;top:937.2px;width:84.6px;height:27.8px;"><span class="t" style="">PrbIncDec:</span></div>
<div class="e" style="left:2051.2px;top:938px;width:84.6px;height:27.6px;"><span class="t" style="">50 %</span><i class="sp"><b></b></i></div>
<div class="l" style="left:2139.6px;top:937.2px;width:84.6px;height:27.8px;"><span class="t" style="">PrbPerturb:</span></div>
<div class="e" style="left:2228px;top:938px;width:84.6px;height:27.6px;"><span class="t" style="">50 %</span><i class="sp"><b></b></i></div>
<div class="l" style="left:725.8px;top:993px;width:84.6px;height:27.8px;"><span class="t" style="">Spessore:</span></div>
<div class="e" style="left:814.2px;top:993.8px;width:84.6px;height:27.6px;"><span class="t" style="">2 px</span><i class="sp"><b></b></i></div>
<div class="l" style="left:902.6px;top:993px;width:84.6px;height:27.8px;"><span class="t" style="">Riempitori:</span></div>
<div class="e" style="left:990.8px;top:993.8px;width:84.6px;height:27.6px;"><span class="t" style="">36</span><i class="sp"><b></b></i></div>
<div class="l" style="left:1079.2px;top:993px;width:84.6px;height:27.8px;"><span class="t" style="">LatiPoligono:</span></div>
<div class="e" style="left:1167.6px;top:993.8px;width:84.6px;height:27.6px;"><span class="t" style="">3</span><i class="sp"><b></b></i></div>
<div class="l" style="left:1256px;top:993px;width:84.6px;height:27.8px;"><span class="t" style="">Subvertici:</span></div>
<div class="e" style="left:1344.4px;top:993.8px;width:84.6px;height:27.6px;"><span class="t" style="">1</span><i class="sp"><b></b></i></div>
<div class="l" style="left:1432.6px;top:993px;width:84.6px;height:27.8px;"><span class="t" style="">Persistenza:</span></div>
<div class="e" style="left:1521px;top:993.8px;width:84.6px;height:27.6px;"><span class="t" style="">1</span><i class="sp"><b></b></i></div>
<div class="l" style="left:1609.4px;top:993px;width:84.6px;height:27.8px;"><span class="t" style="">Portata:</span></div>
<div class="e" style="left:1697.8px;top:993.8px;width:84.6px;height:27.6px;"><span class="t" style="">1x</span><i class="sp"><b></b></i></div>
<div class="l" style="left:1786.2px;top:993px;width:84.6px;height:27.8px;"><span class="t" style="">Sensibilità:</span></div>
<div class="e" style="left:1874.4px;top:993.8px;width:84.6px;height:27.6px;"><span class="t" style="">1x</span><i class="sp"><b></b></i></div>
<div class="l" style="left:1962.8px;top:993px;width:84.6px;height:27.8px;"><span class="t" style="">Contrasto:</span></div>
<div class="e" style="left:2051.2px;top:993.8px;width:84.6px;height:27.6px;"><span class="t" style="">1x</span><i class="sp"><b></b></i></div>
<div class="l" style="left:2139.6px;top:993px;width:84.6px;height:27.8px;"><span class="t" style="">Estensione:</span></div>
<div class="e" style="left:2228px;top:993.8px;width:84.6px;height:27.6px;"><span class="t" style="">1x</span><i class="sp"><b></b></i></div>
<div class="l" style="left:725.8px;top:1048.6px;width:84.6px;height:27.8px;"><span class="t" style="">LogicaNv2o:</span></div>
<div class="e" style="left:814.2px;top:1049.4px;width:84.6px;height:27.6px;"><span class="t" style="">2:2:2:0</span></div>
<div class="l" style="left:902.6px;top:1048.6px;width:84.6px;height:27.8px;"><span class="t" style="">LogicaNv3o:</span></div>
<div class="e" style="left:990.8px;top:1049.4px;width:84.6px;height:27.6px;"><span class="t" style="">2:3:6:0</span></div>
<div class="l" style="left:1079.2px;top:1048.6px;width:84.6px;height:27.8px;"><span class="t" style="">LogicaNvMo:</span></div>
<div class="e" style="left:1167.6px;top:1049.4px;width:84.6px;height:27.6px;"><span class="t" style="">2:2:2:0</span></div>
<div class="l" style="left:1256px;top:1048.6px;width:84.6px;height:27.8px;"><span class="t" style="">IniSequenza:</span></div>
<div class="e" style="left:1344.4px;top:1049.4px;width:84.6px;height:27.6px;"><span class="t" style="transform:scaleX(.81)">2*(t##/¶-Int(t</span></div>
<div class="l" style="left:1432.6px;top:1048.6px;width:84.6px;height:27.8px;"><span class="t" style="">BandaInf:</span></div>
<div class="e" style="left:1521px;top:1049.4px;width:84.6px;height:27.6px;"><span class="t" style="transform:scaleX(.81)">-Cos(t##/2)/</span></div>
<div class="l" style="left:1609.4px;top:1048.6px;width:84.6px;height:27.8px;"><span class="t" style="">BandaSup:</span></div>
<div class="e" style="left:1697.8px;top:1049.4px;width:84.6px;height:27.6px;"><span class="t" style="transform:scaleX(.81)">Cos(t##/2)/2</span></div>
<div class="l" style="left:1786.2px;top:1048.6px;width:84.6px;height:27.8px;"><span class="t" style="">Traiettoria:</span></div>
<div class="e" style="left:1874.4px;top:1049.4px;width:261.2px;height:27.6px;"><span class="t" style="transform:scaleX(.81)">{(¶+t##)/(2*¶)}*Cos(16*t##);{(¶+t##)/(2*¶)}*</span></div>
<div class="l" style="left:2139.6px;top:1048.6px;width:84.6px;height:27.8px;"><span class="t" style="">Ausiliario:</span></div>
<div class="e" style="left:2228px;top:1049.4px;width:84.6px;height:27.6px;"><span class="t" style=""></span></div>
<div class="b" style="left:725.8px;top:1105.2px;width:84.6px;height:28px;"><span class="t" style="">D01</span></div>
<div class="b" style="left:814.2px;top:1105.2px;width:84.6px;height:28px;"><span class="t" style="">D02</span></div>
<div class="b" style="left:902.6px;top:1105.2px;width:84.6px;height:28px;"><span class="t" style="">D03</span></div>
<div class="b bp" style="left:990.8px;top:1105.2px;width:84.6px;height:28px;"><span class="t" style="">D04</span></div>
<div class="b" style="left:1079.2px;top:1105.2px;width:84.6px;height:28px;"><span class="t" style="">D05</span></div>
<div class="b" style="left:1167.6px;top:1105.2px;width:84.6px;height:28px;"><span class="t" style="">D06</span></div>
<div class="b" style="left:1256px;top:1105.2px;width:84.6px;height:28px;"><span class="t" style="">D07</span></div>
<div class="b" style="left:1344.4px;top:1105.2px;width:84.6px;height:28px;"><span class="t" style="">D08</span></div>
<div class="b" style="left:1432.6px;top:1105.2px;width:84.6px;height:28px;"><span class="t" style="">D09</span></div>
<div class="b" style="left:1521px;top:1105.2px;width:84.6px;height:28px;"><span class="t" style="">D10</span></div>
<div class="b" style="left:1609.4px;top:1105.2px;width:84.6px;height:28px;"><span class="t" style="">D11</span></div>
<div class="b" style="left:1697.8px;top:1105.2px;width:84.6px;height:28px;"><span class="t" style="">D12</span></div>
<div class="b" style="left:1786.2px;top:1105.2px;width:84.6px;height:28px;"><span class="t" style="">D13</span></div>
<div class="b" style="left:1874.4px;top:1105.2px;width:84.6px;height:28px;"><span class="t" style="">D14</span></div>
<div class="b" style="left:1962.8px;top:1105.2px;width:84.6px;height:28px;"><span class="t" style="">D15</span></div>
<div class="b" style="left:2051.2px;top:1105.2px;width:84.6px;height:28px;"><span class="t" style="">D16</span></div>
<div class="b bd" style="left:2139.6px;top:1105.2px;width:84.6px;height:28px;"><span class="t" style="">...D04...</span></div>
<div class="b bd" style="left:2228px;top:1105.2px;width:84.6px;height:28px;"><span class="t" style="">D##</span></div>
<div class="sl" style="left:725.8px;top:1160.8px;width:84.6px;height:29.6px;"><span class="t">0°0'0</span><i class="sb"><b class="a1"></b><b class="th"></b><b class="a2"></b></i></div>
<div class="sl" style="left:814.2px;top:1160.8px;width:84.6px;height:29.6px;"><span class="t">0°0'0</span><i class="sb"><b class="a1"></b><b class="th"></b><b class="a2"></b></i></div>
<div class="sl" style="left:902.6px;top:1160.8px;width:84.6px;height:29.6px;"><span class="t">0°0'0</span><i class="sb"><b class="a1"></b><b class="th"></b><b class="a2"></b></i></div>
<div class="sl" style="left:990.8px;top:1160.8px;width:84.6px;height:29.6px;"><span class="t">0°0'0</span><i class="sb"><b class="a1"></b><b class="th"></b><b class="a2"></b></i></div>
<div class="l lc" style="left:2139.6px;top:1160.8px;width:84.6px;height:26.8px;line-height:23.2px"><span class="t" style="font-size:20px;letter-spacing:0.8px">–Δ+</span></div>
<div class="sl" style="left:2228px;top:1160.8px;width:84.6px;height:29.6px;"><span class="t">0°0'0</span><i class="sb"><b class="a1"></b><b class="th"></b><b class="a2"></b></i></div>
<div class="e" style="left:725.8px;top:1216.6px;width:84.6px;height:27.6px;"><span class="t" style="">0</span></div>
<div class="e" style="left:814.2px;top:1216.6px;width:84.6px;height:27.6px;"><span class="t" style="">0</span></div>
<div class="e" style="left:902.6px;top:1216.6px;width:84.6px;height:27.6px;"><span class="t" style="">0</span></div>
<div class="e" style="left:990.8px;top:1216.6px;width:84.6px;height:27.6px;"><span class="t" style="">0</span></div>
<div class="l lc" style="left:2139.6px;top:1216.6px;width:84.6px;height:27.2px;line-height:19.2px"><span class="t" style="transform:scaleX(.81)">D17...D32</span></div>
<div class="e" style="left:2228px;top:1216.6px;width:84.6px;height:27.6px;"><span class="t" style="">0</span></div>
<div class="l" style="left:725.8px;top:1271.4px;width:84.6px;height:27.8px;"><span class="t" style="">Origine:</span></div>
<div class="sw" style="left:814.2px;top:1271.8px;width:84.6px;height:26.8px;background:#fff;"></div>
<div class="l" style="left:902.6px;top:1271.4px;width:84.6px;height:27.8px;"><span class="t" style="">Mono:</span></div>
<div class="sw" style="left:990.8px;top:1271.8px;width:84.6px;height:26.8px;background:#800080;"></div>
<div class="l" style="left:1079.2px;top:1271.4px;width:84.6px;height:27.8px;"><span class="t" style="">Antiorigine:</span></div>
<div class="sw" style="left:1167.6px;top:1271.8px;width:84.6px;height:26.8px;background:#000;"></div>
<div class="l" style="left:1256px;top:1271.4px;width:84.6px;height:27.8px;"><span class="t" style="">CS:</span></div>
<div class="sw" style="left:1344.4px;top:1271.8px;width:84.6px;height:26.8px;background:#fff;"></div>
<div class="l" style="left:1432.6px;top:1271.4px;width:84.6px;height:27.8px;"><span class="t" style="">MouseVxx:</span></div>
<div class="sw" style="left:1521px;top:1271.8px;width:84.6px;height:26.8px;background:#fff;"></div>
<div class="l" style="left:1609.4px;top:1271.4px;width:84.6px;height:27.8px;"><span class="t" style="">Anticasuale:</span></div>
<div class="sw" style="left:1697.8px;top:1271.8px;width:84.6px;height:26.8px;background:#000;"></div>
<div class="l" style="left:1786.2px;top:1271.4px;width:84.6px;height:27.8px;"><span class="t" style="">Antiazimut:</span></div>
<div class="sw" style="left:1874.4px;top:1271.8px;width:84.6px;height:26.8px;background:#000;"></div>
<div class="l" style="left:1962.8px;top:1271.4px;width:84.6px;height:27.8px;"><span class="t" style="">Antizenit:</span></div>
<div class="sw" style="left:2051.2px;top:1271.8px;width:84.6px;height:26.8px;background:#000;"></div>
<div class="l" style="left:2139.6px;top:1271.4px;width:84.6px;height:27.8px;"><span class="t" style="">Antidist:</span></div>
<div class="sw" style="left:2228px;top:1271.8px;width:84.6px;height:26.8px;background:#000;"></div>
<div class="b" style="left:725.8px;top:1327.8px;width:173px;height:28px;"><span class="t" style="">GraficoInItinere</span></div>
<div class="b bp" style="left:902.6px;top:1327.8px;width:173px;height:28px;"><span class="t" style="">AggiornamentoSuVariazione</span></div>
<div class="b bp" style="left:1079.2px;top:1327.8px;width:173px;height:28px;"><span class="t" style="">AggiornamentoInCiclo</span></div>
<div class="b bp" style="left:1256px;top:1327.8px;width:173px;height:28px;"><span class="t" style="">ConversioneSimbolica</span></div>
<div class="b" style="left:1432.6px;top:1327.8px;width:173px;height:28px;"><span class="t" style="">TracciaPermanente</span></div>
<div class="b bp" style="left:1609.4px;top:1327.8px;width:173px;height:28px;"><span class="t" style="">VxxVisibile</span></div>
<div class="b bp" style="left:1786.2px;top:1327.8px;width:173px;height:28px;"><span class="t" style="">SfondoIndipendente</span></div>
<div class="b" style="left:1962.8px;top:1327.8px;width:173px;height:28px;"><span class="t" style="">SfondoSuOrigine</span></div>
<div class="b" style="left:2139.6px;top:1327.8px;width:173px;height:28px;"><span class="t" style="">SfondoSuAntiorigine</span></div>
<div class="" style="left:714.4px;top:1371.2px;width:1607.2px;height:52.8px;border:2px solid;border-color:#55534e #fbfaf6 #fbfaf6 #77756f;background:#d4d0c8"></div>
<div class="dlg" style="left:10.4px;top:256.8px;width:1616.4px;height:1260.4px;"></div>
<div class="tb" style="left:13.2px;top:261.2px;width:1609.2px;height:22px;"><i class="ticon"></i><span class="tt">[IperMaT] - [ImpostaFormaColoreVertici...]</span><i class="xb"><svg viewBox="0 0 8 7" width="12.8" height="11.2"><path d="M1.4 0.9L6.6 6.1M6.6 0.9L1.4 6.1" stroke="#000" stroke-width="1.45"/></svg></i></div>
<div class="hd" style="left:13.2px;top:283.2px;width:1609.2px;height:52px;"><span class="t" style="position:absolute;left:14px;top:18.8px;color:#101010">[G1C - Politopo]</span></div>
<div class="b" style="left:1348.8px;top:296.4px;width:84.6px;height:28px;"><span class="t" style="">Guida</span></div>
<div class="b" style="left:1437.2px;top:296.4px;width:84.6px;height:28px;"><span class="t" style="">Annulla</span></div>
<div class="b" style="left:1525.6px;top:296.4px;width:84.6px;height:28px;"><span class="t" style="">Chiudi</span></div>
<div class="" style="left:13.2px;top:335.2px;width:1609.2px;height:2.4px;background:#fff;opacity:.35"></div>
<div class="g" style="left:15.8px;top:344px;width:1073.8px;height:45.6px;"><span class="gl"><span class="t" style="">ComandiGenerali...</span></span></div>
<div class="g" style="left:15.8px;top:399.6px;width:1073.8px;height:45.6px;"><span class="gl ge"></span></div>
<div class="g" style="left:15.8px;top:455.4px;width:1073.8px;height:45.6px;"><span class="gl ge"></span></div>
<div class="g" style="left:15.8px;top:511.2px;width:1073.8px;height:45.6px;"><span class="gl ge"></span></div>
<div class="g" style="left:15.8px;top:566.8px;width:1073.8px;height:45.6px;"><span class="gl"><span class="t" style="">Forma</span></span></div>
<div class="g" style="left:15.8px;top:622.4px;width:1073.8px;height:45.6px;"><span class="gl"><span class="t" style="">StrutturaReticolare</span></span></div>
<div class="g" style="left:15.8px;top:678.2px;width:1073.8px;height:45.6px;"><span class="gl"><span class="t" style="">StrutturaCromatica</span></span></div>
<div class="g" style="left:15.8px;top:733.8px;width:1073.8px;height:45.6px;"><span class="gl"><span class="t" style="">CategoriaCromatica</span></span></div>
<div class="g" style="left:15.8px;top:789.6px;width:1073.8px;height:45.6px;"><span class="gl"><span class="t" style="">EffettoLuce</span></span></div>
<div class="g" style="left:15.8px;top:845.4px;width:1603.8px;height:45.6px;"><span class="gl"><span class="t" style="">EffettoStruttura</span></span></div>
<div class="g" style="left:15.8px;top:901px;width:1603.8px;height:45.6px;"><span class="gl"><span class="t" style="">EffettiVari</span></span></div>
<div class="g" style="left:15.8px;top:956.8px;width:1603.8px;height:45.6px;"><span class="gl ge"></span></div>
<div class="g" style="left:15.8px;top:1012.4px;width:1603.8px;height:45.6px;"><span class="gl"><span class="t" style="">RiferimentiVari</span></span></div>
<div class="g" style="left:15.8px;top:1068px;width:1603.8px;height:45.6px;"><span class="gl ge"></span></div>
<div class="g" style="left:15.8px;top:1123.8px;width:1603.8px;height:45.6px;"><span class="gl"><span class="t" style="">FunzionaliVari</span></span></div>
<div class="g" style="left:15.8px;top:1179.6px;width:1603.8px;height:45.6px;"><span class="gl gd"><span class="t" style="">VxxDimensioniSpazio</span></span></div>
<div class="g" style="left:15.8px;top:1235.2px;width:1603.8px;height:45.6px;"><span class="gl"><span class="t" style="">VxxRiferimentoVariazionale</span></span></div>
<div class="g" style="left:15.8px;top:1291px;width:1603.8px;height:45.6px;"><span class="gl"><span class="t" style="">VxxRiferimentoFunzionale</span></span></div>
<div class="g" style="left:15.8px;top:1346.6px;width:1603.8px;height:45.6px;"><span class="gl"><span class="t" style="">ColoriDiRiferimento</span></span></div>
<div class="g" style="left:15.8px;top:1402.2px;width:1603.8px;height:45.6px;"><span class="gl"><span class="t" style="">CaratteristicheVisualizzazioneEsempio</span></span></div>
<div class="g" style="left:1098.8px;top:344px;width:520.8px;height:491.2px;"><span class="gl"><span class="t" style="">Esempio</span></span></div>
<div class="cv" style="left:1109.2px;top:356.8px;width:499.2px;height:469.2px;"><i class="ball"></i></div>
<div class="b" style="left:24.6px;top:354.4px;width:173px;height:28px;"><span class="t" style="">ImpostaPredefinito</span></div>
<div class="b" style="left:201.4px;top:354.4px;width:84.6px;height:28px;"><span class="t" style="">...Selezione...</span></div>
<div class="b" style="left:289.6px;top:354.4px;width:84.6px;height:28px;"><span class="t" style="">...Disegno...</span></div>
<div class="b" style="left:378px;top:354.4px;width:84.6px;height:28px;"><span class="t" style="">...PiAureo...</span></div>
<div class="b" style="left:466.4px;top:354.4px;width:84.6px;height:28px;"><span class="t" style="">...Ciclo...</span></div>
<div class="b" style="left:554.8px;top:354.4px;width:84.6px;height:28px;"><span class="t" style="">Cicla</span></div>
<div class="b" style="left:643.2px;top:354.4px;width:84.6px;height:28px;"><span class="t" style="">Interrompi</span></div>
<div class="b" style="left:731.4px;top:354.4px;width:84.6px;height:28px;"><span class="t" style="">Cancella</span></div>
<div class="b" style="left:819.8px;top:354.4px;width:84.6px;height:28px;"><span class="t" style="">Azzera</span></div>
<div class="b" style="left:908.2px;top:354.4px;width:84.6px;height:28px;"><span class="t" style="">CreaSuFile...</span></div>
<div class="b" style="left:996.6px;top:354.4px;width:84.6px;height:28px;"><span class="t" style="">Aggiorna</span></div>
<div class="b" style="left:24.6px;top:410px;width:261.2px;height:28px;"><span class="t" style="">ImpostaColoreOrigineDaAntiorigine</span></div>
<div class="b" style="left:289.6px;top:410px;width:173px;height:28px;"><span class="t" style="">...AntiorigineDaOrigine</span></div>
<div class="b" style="left:466.4px;top:410px;width:173px;height:28px;"><span class="t" style="">...AntiAZDDaAntiorigine</span></div>
<div class="b" style="left:643.2px;top:410px;width:261.2px;height:28px;"><span class="t" style="">InvertiColoreOrigineConAntiorigine</span></div>
<div class="b" style="left:908.2px;top:410px;width:173px;height:28px;"><span class="t" style="">ImpostaStandardDMA</span></div>
<div class="b" style="left:24.6px;top:465.8px;width:173px;height:28px;"><span class="t" style="">ImpostaOscAzimutale...</span></div>
<div class="b" style="left:201.4px;top:465.8px;width:84.6px;height:28px;"><span class="t" style="">...cZenitale...</span></div>
<div class="b" style="left:289.6px;top:465.8px;width:84.6px;height:28px;"><span class="t" style="">...cDistale...</span></div>
<div class="b" style="left:378px;top:465.8px;width:173px;height:28px;"><span class="t" style="">ImpostaOskAzimutale...</span></div>
<div class="b" style="left:554.8px;top:465.8px;width:84.6px;height:28px;"><span class="t" style="">...kZenitale...</span></div>
<div class="b" style="left:643.2px;top:465.8px;width:84.6px;height:28px;"><span class="t" style="">...kDistale...</span></div>
<div class="b" style="left:731.4px;top:465.8px;width:173px;height:28px;"><span class="t" style="">AlternaLogicaNvTra2oE3o</span></div>
<div class="b" style="left:908.2px;top:465.8px;width:84.6px;height:28px;"><span class="t" style="">...Tra2oEMo</span></div>
<div class="b" style="left:996.6px;top:465.8px;width:84.6px;height:28px;"><span class="t" style="">...Tra3oEMo</span></div>
<div class="b" style="left:24.6px;top:521.6px;width:173px;height:28px;"><span class="t" style="">ImpostaOscLogica...</span></div>
<div class="b" style="left:201.4px;top:521.6px;width:173px;height:28px;"><span class="t" style="">ImpostaOskLogica...</span></div>
<div class="b" style="left:378px;top:521.6px;width:173px;height:28px;"><span class="t" style="">CaricaTraiettoriaDaVxx</span></div>
<div class="b" style="left:554.8px;top:521.6px;width:173px;height:28px;"><span class="t" style="">...VxxDaTraiettoria</span></div>
<div class="b" style="left:731.4px;top:521.6px;width:173px;height:28px;"><span class="t" style="">...AusiliarioDaVxx</span></div>
<div class="b" style="left:908.2px;top:521.6px;width:173px;height:28px;"><span class="t" style="">...VxxDaAusiliario</span></div>
<div class="b" style="left:24.6px;top:577.2px;width:84.6px;height:28px;"><span class="t" style="">Pixel</span></div>
<div class="b" style="left:113px;top:577.2px;width:173px;height:28px;"><span class="t" style="">Segmento</span></div>
<div class="b bp" style="left:289.6px;top:577.2px;width:173px;height:28px;"><span class="t" style="">Cerchio</span></div>
<div class="b" style="left:466.4px;top:577.2px;width:173px;height:28px;"><span class="t" style="">Poligono...</span></div>
<div class="b" style="left:643.2px;top:577.2px;width:173px;height:28px;"><span class="t" style="">Banda</span></div>
<div class="b" style="left:819.8px;top:577.2px;width:173px;height:28px;"><span class="t" style="">Traiettoria</span></div>
<div class="b" style="left:996.6px;top:577.2px;width:84.6px;height:28px;"><span class="t" style="">Frame...</span></div>
<div class="l" style="left:24.6px;top:633.8px;width:84.6px;height:27.8px;"><span class="t" style="">Primario:</span></div>
<div class="e" style="left:113px;top:633.6px;width:173px;height:24.4px;"><span class="t" style="">Distale</span><i class="dd"></i></div>
<div class="l" style="left:289.6px;top:633.8px;width:84.6px;height:27.8px;"><span class="t" style="">Secondario:</span></div>
<div class="e" style="left:378px;top:633.6px;width:173px;height:24.4px;"><span class="t" style="">Assente</span><i class="dd"></i></div>
<div class="l" style="left:554.8px;top:633.8px;width:84.6px;height:27.8px;"><span class="t" style="">Terziario:</span></div>
<div class="e" style="left:643.2px;top:633.6px;width:173px;height:24.4px;"><span class="t" style="">Automatico</span><i class="dd"></i></div>
<div class="l" style="left:819.8px;top:633.8px;width:84.6px;height:27.8px;"><span class="t" style="">Riempimento:</span></div>
<div class="e" style="left:908.2px;top:633.6px;width:173px;height:24.4px;"><span class="t" style="">Solido</span><i class="dd"></i></div>
<div class="l" style="left:24.6px;top:689.6px;width:84.6px;height:27.8px;"><span class="t" style="">Distribuzione:</span></div>
<div class="e" style="left:113px;top:689.4px;width:173px;height:24.4px;"><span class="t" style="">Persistenziale</span><i class="dd"></i></div>
<div class="l" style="left:289.6px;top:689.6px;width:84.6px;height:27.8px;"><span class="t" style="">Combinazione</span></div>
<div class="e" style="left:378px;top:689.4px;width:173px;height:24.4px;"><span class="t" style="">SemisommaleNormata</span><i class="dd"></i></div>
<div class="l" style="left:554.8px;top:689.6px;width:84.6px;height:27.8px;"><span class="t" style="">Ordinamento:</span></div>
<div class="e" style="left:643.2px;top:689.4px;width:173px;height:24.4px;"><span class="t" style="">0 - Automatico</span><i class="dd"></i></div>
<div class="l" style="left:819.8px;top:689.6px;width:84.6px;height:27.8px;"><span class="t" style="">Composizione</span></div>
<div class="e" style="left:908.2px;top:689.4px;width:173px;height:24.4px;"><span class="t" style="">Sequenziale</span><i class="dd"></i></div>
<div class="b" style="left:24.6px;top:744.2px;width:173px;height:28px;"><span class="t" style="">Monocolore</span></div>
<div class="b" style="left:201.4px;top:744.2px;width:84.6px;height:28px;"><span class="t" style="">Semicolore</span></div>
<div class="b" style="left:289.6px;top:744.2px;width:173px;height:28px;"><span class="t" style="">SemicoloreInversa</span></div>
<div class="b" style="left:466.4px;top:744.2px;width:84.6px;height:28px;"><span class="t" style="">Bicolore</span></div>
<div class="b" style="left:554.8px;top:744.2px;width:173px;height:28px;"><span class="t" style="">BicoloreInversa</span></div>
<div class="b bp" style="left:731.4px;top:744.2px;width:173px;height:28px;"><span class="t" style="">Tricolore</span></div>
<div class="b" style="left:908.2px;top:744.2px;width:173px;height:28px;"><span class="t" style="">Multicolore...</span></div>
<div class="b bp" style="left:24.6px;top:800px;width:173px;height:28px;"><span class="t" style="">DaOrigine</span></div>
<div class="b" style="left:201.4px;top:800px;width:173px;height:28px;"><span class="t" style="">DaCS</span></div>
<div class="b" style="left:378px;top:800px;width:173px;height:28px;"><span class="t" style="">DaMouse</span></div>
<div class="b" style="left:554.8px;top:800px;width:173px;height:28px;"><span class="t" style="">DaVxx</span></div>
<div class="b" style="left:24.6px;top:855.8px;width:173px;height:28px;"><span class="t" style="">OscAzimutale</span></div>
<div class="b" style="left:201.4px;top:855.8px;width:84.6px;height:28px;"><span class="t" style="">OscZenitale</span></div>
<div class="b" style="left:289.6px;top:855.8px;width:84.6px;height:28px;"><span class="t" style="">OscDistale</span></div>
<div class="b" style="left:378px;top:855.8px;width:173px;height:28px;"><span class="t" style="">OskAzimutale</span></div>
<div class="b" style="left:554.8px;top:855.8px;width:84.6px;height:28px;"><span class="t" style="">OskZenitale</span></div>
<div class="b" style="left:643.2px;top:855.8px;width:84.6px;height:28px;"><span class="t" style="">OskDistale</span></div>
<div class="b bp" style="left:731.4px;top:855.8px;width:173px;height:28px;"><span class="t" style="">OscOskDinamico</span></div>
<div class="b" style="left:908.2px;top:855.8px;width:84.6px;height:28px;"><span class="t" style="">DifCasualeP</span></div>
<div class="b" style="left:996.6px;top:855.8px;width:84.6px;height:28px;"><span class="t" style="">DifCasualeS</span></div>
<div class="b bp" style="left:1085px;top:855.8px;width:173px;height:28px;"><span class="t" style="">DifCasualeDinamico</span></div>
<div class="b" style="left:1261.6px;top:855.8px;width:173px;height:28px;"><span class="t" style="">IniSequenzaFunzionale</span></div>
<div class="b" style="left:1438.4px;top:855.8px;width:173px;height:28px;"><span class="t" style="">SogliaColoreNormata</span></div>
<div class="b" style="left:24.6px;top:911.4px;width:173px;height:28px;"><span class="t" style="">SequenzaInversaInItinere</span></div>
<div class="b" style="left:201.4px;top:911.4px;width:173px;height:28px;"><span class="t" style="">GrandezzaFissa</span></div>
<div class="b" style="left:378px;top:911.4px;width:173px;height:28px;"><span class="t" style="">InversioneGrandezza</span></div>
<div class="b bp" style="left:554.8px;top:911.4px;width:173px;height:28px;"><span class="t" style="">LuceDirezionale</span></div>
<div class="b bp" style="left:731.4px;top:911.4px;width:84.6px;height:28px;"><span class="t" style="">CentroFisso</span></div>
<div class="b" style="left:819.8px;top:911.4px;width:84.6px;height:28px;"><span class="t" style="">Corona</span></div>
<div class="b bp" style="left:908.2px;top:911.4px;width:173px;height:28px;"><span class="t" style="">Perimetrazione</span></div>
<div class="b bp" style="left:1085px;top:911.4px;width:173px;height:28px;"><span class="t" style="">TraiettoriaIndipendente</span></div>
<div class="b bp" style="left:1261.6px;top:911.4px;width:173px;height:28px;"><span class="t" style="">TraiettoriaIncrementale</span></div>
<div class="b" style="left:1438.4px;top:911.4px;width:173px;height:28px;"><span class="t" style="">PoligonoCromico</span></div>
<div class="b bp" style="left:24.6px;top:967.2px;width:173px;height:28px;"><span class="t" style="">FCCromico</span></div>
<div class="b bp" style="left:201.4px;top:967.2px;width:84.6px;height:28px;"><span class="t" style="">CSCromico</span></div>
<div class="b bp" style="left:289.6px;top:967.2px;width:84.6px;height:28px;"><span class="t" style="">VxxCromico</span></div>
<div class="b bp" style="left:378px;top:967.2px;width:173px;height:28px;"><span class="t" style="">DistribuzioneEvolutivaPura</span></div>
<div class="b" style="left:554.8px;top:967.2px;width:173px;height:28px;"><span class="t" style="">DistribuzioneAntievolutiva</span></div>
<div class="b" style="left:731.4px;top:967.2px;width:173px;height:28px;"><span class="t" style="">CombinazioneLogicaCiclica</span></div>
<div class="b" style="left:908.2px;top:967.2px;width:173px;height:28px;"><span class="t" style="">ComposizionePerturbativa</span></div>
<div class="b" style="left:1085px;top:967.2px;width:173px;height:28px;"><span class="t" style="">CromoperturbativaCasuale</span></div>
<div class="b" style="left:1261.6px;top:967.2px;width:173px;height:28px;"><span class="t" style="">SubverticeAllineato</span></div>
<div class="b" style="left:1438.4px;top:967.2px;width:173px;height:28px;"><span class="t" style="">SubverticeCromico...</span></div>
<div class="l" style="left:24.6px;top:1022px;width:84.6px;height:27.8px;"><span class="t" style="">UnitàMisura:</span></div>
<div class="e" style="left:113px;top:1022.8px;width:84.6px;height:27.6px;"><span class="t" style="">Pixel (px)</span><i class="sp"><b></b></i></div>
<div class="l" style="left:201.4px;top:1022px;width:84.6px;height:27.8px;"><span class="t" style="">MisuraMax:</span></div>
<div class="e" style="left:289.6px;top:1022.8px;width:84.6px;height:27.6px;"><span class="t" style="">167 px</span><i class="sp"><b></b></i></div>
<div class="l" style="left:378px;top:1022px;width:84.6px;height:27.8px;"><span class="t" style="">CoronaMax:</span></div>
<div class="e" style="left:466.4px;top:1022.8px;width:84.6px;height:27.6px;"><span class="t" style="">50 %</span><i class="sp"><b></b></i></div>
<div class="l" style="left:554.8px;top:1022px;width:84.6px;height:27.8px;"><span class="t" style="">PrxOscOskA:</span></div>
<div class="e" style="left:643.2px;top:1022.8px;width:84.6px;height:27.6px;"><span class="t" style="">50 %</span><i class="sp"><b></b></i></div>
<div class="l" style="left:731.4px;top:1022px;width:84.6px;height:27.8px;"><span class="t" style="">PrxOscOskZ:</span></div>
<div class="e" style="left:819.8px;top:1022.8px;width:84.6px;height:27.6px;"><span class="t" style="">50 %</span><i class="sp"><b></b></i></div>
<div class="l" style="left:908.2px;top:1022px;width:84.6px;height:27.8px;"><span class="t" style="">PrxOscOskD:</span></div>
<div class="e" style="left:996.6px;top:1022.8px;width:84.6px;height:27.6px;"><span class="t" style="">50 %</span><i class="sp"><b></b></i></div>
<div class="l" style="left:1085px;top:1022px;width:84.6px;height:27.8px;"><span class="t" style="">PrxDifCas:</span></div>
<div class="e" style="left:1173.2px;top:1022.8px;width:84.6px;height:27.6px;"><span class="t" style="">50 %</span><i class="sp"><b></b></i></div>
<div class="l" style="left:1261.6px;top:1022px;width:84.6px;height:27.8px;"><span class="t" style="">PrbIncDec:</span></div>
<div class="e" style="left:1350px;top:1022.8px;width:84.6px;height:27.6px;"><span class="t" style="">50 %</span><i class="sp"><b></b></i></div>
<div class="l" style="left:1438.4px;top:1022px;width:84.6px;height:27.8px;"><span class="t" style="">PrbPerturb:</span></div>
<div class="e" style="left:1526.8px;top:1022.8px;width:84.6px;height:27.6px;"><span class="t" style="">50 %</span><i class="sp"><b></b></i></div>
<div class="l" style="left:24.6px;top:1077.8px;width:84.6px;height:27.8px;"><span class="t" style="">Spessore:</span></div>
<div class="e" style="left:113px;top:1078.4px;width:84.6px;height:27.6px;"><span class="t" style="">2 px</span><i class="sp"><b></b></i></div>
<div class="l" style="left:201.4px;top:1077.8px;width:84.6px;height:27.8px;"><span class="t" style="">Riempitori:</span></div>
<div class="e" style="left:289.6px;top:1078.4px;width:84.6px;height:27.6px;"><span class="t" style="">36</span><i class="sp"><b></b></i></div>
<div class="l" style="left:378px;top:1077.8px;width:84.6px;height:27.8px;"><span class="t" style="">LatiPoligono:</span></div>
<div class="e" style="left:466.4px;top:1078.4px;width:84.6px;height:27.6px;"><span class="t" style="">3</span><i class="sp"><b></b></i></div>
<div class="l" style="left:554.8px;top:1077.8px;width:84.6px;height:27.8px;"><span class="t" style="">Subvertici:</span></div>
<div class="e" style="left:643.2px;top:1078.4px;width:84.6px;height:27.6px;"><span class="t" style="">1</span><i class="sp"><b></b></i></div>
<div class="l" style="left:731.4px;top:1077.8px;width:84.6px;height:27.8px;"><span class="t" style="">Persistenza:</span></div>
<div class="e" style="left:819.8px;top:1078.4px;width:84.6px;height:27.6px;"><span class="t" style="">1</span><i class="sp"><b></b></i></div>
<div class="l" style="left:908.2px;top:1077.8px;width:84.6px;height:27.8px;"><span class="t" style="">Portata:</span></div>
<div class="e" style="left:996.6px;top:1078.4px;width:84.6px;height:27.6px;"><span class="t" style="">1x</span><i class="sp"><b></b></i></div>
<div class="l" style="left:1085px;top:1077.8px;width:84.6px;height:27.8px;"><span class="t" style="">Sensibilità:</span></div>
<div class="e" style="left:1173.2px;top:1078.4px;width:84.6px;height:27.6px;"><span class="t" style="">1x</span><i class="sp"><b></b></i></div>
<div class="l" style="left:1261.6px;top:1077.8px;width:84.6px;height:27.8px;"><span class="t" style="">Contrasto:</span></div>
<div class="e" style="left:1350px;top:1078.4px;width:84.6px;height:27.6px;"><span class="t" style="">1x</span><i class="sp"><b></b></i></div>
<div class="l" style="left:1438.4px;top:1077.8px;width:84.6px;height:27.8px;"><span class="t" style="">Estensione:</span></div>
<div class="e" style="left:1526.8px;top:1078.4px;width:84.6px;height:27.6px;"><span class="t" style="">1x</span><i class="sp"><b></b></i></div>
<div class="l" style="left:24.6px;top:1133.4px;width:84.6px;height:27.8px;"><span class="t" style="">LogicaNv2o:</span></div>
<div class="e" style="left:113px;top:1134.2px;width:84.6px;height:27.6px;"><span class="t" style="">2:2:2:0</span></div>
<div class="l" style="left:201.4px;top:1133.4px;width:84.6px;height:27.8px;"><span class="t" style="">LogicaNv3o:</span></div>
<div class="e" style="left:289.6px;top:1134.2px;width:84.6px;height:27.6px;"><span class="t" style="">2:3:6:0</span></div>
<div class="l" style="left:378px;top:1133.4px;width:84.6px;height:27.8px;"><span class="t" style="">LogicaNvMo:</span></div>
<div class="e" style="left:466.4px;top:1134.2px;width:84.6px;height:27.6px;"><span class="t" style="">2:2:2:0</span></div>
<div class="l" style="left:554.8px;top:1133.4px;width:84.6px;height:27.8px;"><span class="t" style="">IniSequenza:</span></div>
<div class="e" style="left:643.2px;top:1134.2px;width:84.6px;height:27.6px;"><span class="t" style="transform:scaleX(.81)">2*(t##/¶-Int(t</span></div>
<div class="l" style="left:731.4px;top:1133.4px;width:84.6px;height:27.8px;"><span class="t" style="">BandaInf:</span></div>
<div class="e" style="left:819.8px;top:1134.2px;width:84.6px;height:27.6px;"><span class="t" style="transform:scaleX(.81)">-Cos(t##/2)/</span></div>
<div class="l" style="left:908.2px;top:1133.4px;width:84.6px;height:27.8px;"><span class="t" style="">BandaSup:</span></div>
<div class="e" style="left:996.6px;top:1134.2px;width:84.6px;height:27.6px;"><span class="t" style="transform:scaleX(.81)">Cos(t##/2)/2</span></div>
<div class="l" style="left:1085px;top:1133.4px;width:84.6px;height:27.8px;"><span class="t" style="">Traiettoria:</span></div>
<div class="e" style="left:1173.2px;top:1134.2px;width:261.2px;height:27.6px;"><span class="t" style="transform:scaleX(.81)">{(¶+t##)/(2*¶)}*Cos(16*t##);{(¶+t##)/(2*¶)}*</span></div>
<div class="l" style="left:1438.4px;top:1133.4px;width:84.6px;height:27.8px;"><span class="t" style="">Ausiliario:</span></div>
<div class="e" style="left:1526.8px;top:1134.2px;width:84.6px;height:27.6px;"><span class="t" style=""></span></div>
<div class="b" style="left:24.6px;top:1190px;width:84.6px;height:28px;"><span class="t" style="">D01</span></div>
<div class="b" style="left:113px;top:1190px;width:84.6px;height:28px;"><span class="t" style="">D02</span></div>
<div class="b" style="left:201.4px;top:1190px;width:84.6px;height:28px;"><span class="t" style="">D03</span></div>
<div class="b bp" style="left:289.6px;top:1190px;width:84.6px;height:28px;"><span class="t" style="">D04</span></div>
<div class="b" style="left:378px;top:1190px;width:84.6px;height:28px;"><span class="t" style="">D05</span></div>
<div class="b" style="left:466.4px;top:1190px;width:84.6px;height:28px;"><span class="t" style="">D06</span></div>
<div class="b" style="left:554.8px;top:1190px;width:84.6px;height:28px;"><span class="t" style="">D07</span></div>
<div class="b" style="left:643.2px;top:1190px;width:84.6px;height:28px;"><span class="t" style="">D08</span></div>
<div class="b" style="left:731.4px;top:1190px;width:84.6px;height:28px;"><span class="t" style="">D09</span></div>
<div class="b" style="left:819.8px;top:1190px;width:84.6px;height:28px;"><span class="t" style="">D10</span></div>
<div class="b" style="left:908.2px;top:1190px;width:84.6px;height:28px;"><span class="t" style="">D11</span></div>
<div class="b" style="left:996.6px;top:1190px;width:84.6px;height:28px;"><span class="t" style="">D12</span></div>
<div class="b" style="left:1085px;top:1190px;width:84.6px;height:28px;"><span class="t" style="">D13</span></div>
<div class="b" style="left:1173.2px;top:1190px;width:84.6px;height:28px;"><span class="t" style="">D14</span></div>
<div class="b" style="left:1261.6px;top:1190px;width:84.6px;height:28px;"><span class="t" style="">D15</span></div>
<div class="b" style="left:1350px;top:1190px;width:84.6px;height:28px;"><span class="t" style="">D16</span></div>
<div class="b bd" style="left:1438.4px;top:1190px;width:84.6px;height:28px;"><span class="t" style="">...D04...</span></div>
<div class="b bd" style="left:1526.8px;top:1190px;width:84.6px;height:28px;"><span class="t" style="">D##</span></div>
<div class="sl" style="left:24.6px;top:1245.6px;width:84.6px;height:29.6px;"><span class="t">0°0'0</span><i class="sb"><b class="a1"></b><b class="th"></b><b class="a2"></b></i></div>
<div class="sl" style="left:113px;top:1245.6px;width:84.6px;height:29.6px;"><span class="t">0°0'0</span><i class="sb"><b class="a1"></b><b class="th"></b><b class="a2"></b></i></div>
<div class="sl" style="left:201.4px;top:1245.6px;width:84.6px;height:29.6px;"><span class="t">0°0'0</span><i class="sb"><b class="a1"></b><b class="th"></b><b class="a2"></b></i></div>
<div class="sl" style="left:289.6px;top:1245.6px;width:84.6px;height:29.6px;"><span class="t">0°0'0</span><i class="sb"><b class="a1"></b><b class="th"></b><b class="a2"></b></i></div>
<div class="l lc" style="left:1438.4px;top:1245.6px;width:84.6px;height:26.8px;line-height:23.2px"><span class="t" style="font-size:20px;letter-spacing:0.8px">–Δ+</span></div>
<div class="sl" style="left:1526.8px;top:1245.6px;width:84.6px;height:29.6px;"><span class="t">0°0'0</span><i class="sb"><b class="a1"></b><b class="th"></b><b class="a2"></b></i></div>
<div class="e" style="left:24.6px;top:1301.4px;width:84.6px;height:27.6px;"><span class="t" style="">0</span></div>
<div class="e" style="left:113px;top:1301.4px;width:84.6px;height:27.6px;"><span class="t" style="">0</span></div>
<div class="e" style="left:201.4px;top:1301.4px;width:84.6px;height:27.6px;"><span class="t" style="">0</span></div>
<div class="e" style="left:289.6px;top:1301.4px;width:84.6px;height:27.6px;"><span class="t" style="">0</span></div>
<div class="l lc" style="left:1438.4px;top:1301.4px;width:84.6px;height:27.2px;line-height:19.2px"><span class="t" style="transform:scaleX(.81)">D17...D32</span></div>
<div class="e" style="left:1526.8px;top:1301.4px;width:84.6px;height:27.6px;"><span class="t" style="">0</span></div>
<div class="l" style="left:24.6px;top:1356.2px;width:84.6px;height:27.8px;"><span class="t" style="">Origine:</span></div>
<div class="sw" style="left:113px;top:1356.6px;width:84.6px;height:26.8px;background:#fff;"></div>
<div class="l" style="left:201.4px;top:1356.2px;width:84.6px;height:27.8px;"><span class="t" style="">Mono:</span></div>
<div class="sw" style="left:289.6px;top:1356.6px;width:84.6px;height:26.8px;background:#800080;"></div>
<div class="l" style="left:378px;top:1356.2px;width:84.6px;height:27.8px;"><span class="t" style="">Antiorigine:</span></div>
<div class="sw" style="left:466.4px;top:1356.6px;width:84.6px;height:26.8px;background:#000;"></div>
<div class="l" style="left:554.8px;top:1356.2px;width:84.6px;height:27.8px;"><span class="t" style="">CS:</span></div>
<div class="sw" style="left:643.2px;top:1356.6px;width:84.6px;height:26.8px;background:#fff;"></div>
<div class="l" style="left:731.4px;top:1356.2px;width:84.6px;height:27.8px;"><span class="t" style="">MouseVxx:</span></div>
<div class="sw" style="left:819.8px;top:1356.6px;width:84.6px;height:26.8px;background:#fff;"></div>
<div class="l" style="left:908.2px;top:1356.2px;width:84.6px;height:27.8px;"><span class="t" style="">Anticasuale:</span></div>
<div class="sw" style="left:996.6px;top:1356.6px;width:84.6px;height:26.8px;background:#000;"></div>
<div class="l" style="left:1085px;top:1356.2px;width:84.6px;height:27.8px;"><span class="t" style="">Antiazimut:</span></div>
<div class="sw" style="left:1173.2px;top:1356.6px;width:84.6px;height:26.8px;background:#000;"></div>
<div class="l" style="left:1261.6px;top:1356.2px;width:84.6px;height:27.8px;"><span class="t" style="">Antizenit:</span></div>
<div class="sw" style="left:1350px;top:1356.6px;width:84.6px;height:26.8px;background:#000;"></div>
<div class="l" style="left:1438.4px;top:1356.2px;width:84.6px;height:27.8px;"><span class="t" style="">Antidist:</span></div>
<div class="sw" style="left:1526.8px;top:1356.6px;width:84.6px;height:26.8px;background:#000;"></div>
<div class="b" style="left:24.6px;top:1412.6px;width:173px;height:28px;"><span class="t" style="">GraficoInItinere</span></div>
<div class="b bp" style="left:201.4px;top:1412.6px;width:173px;height:28px;"><span class="t" style="">AggiornamentoSuVariazione</span></div>
<div class="b bp" style="left:378px;top:1412.6px;width:173px;height:28px;"><span class="t" style="">AggiornamentoInCiclo</span></div>
<div class="b bp" style="left:554.8px;top:1412.6px;width:173px;height:28px;"><span class="t" style="">ConversioneSimbolica</span></div>
<div class="b" style="left:731.4px;top:1412.6px;width:173px;height:28px;"><span class="t" style="">TracciaPermanente</span></div>
<div class="b bp" style="left:908.2px;top:1412.6px;width:173px;height:28px;"><span class="t" style="">VxxVisibile</span></div>
<div class="b bp" style="left:1085px;top:1412.6px;width:173px;height:28px;"><span class="t" style="">SfondoIndipendente</span></div>
<div class="b" style="left:1261.6px;top:1412.6px;width:173px;height:28px;"><span class="t" style="">SfondoSuOrigine</span></div>
<div class="b" style="left:1438.4px;top:1412.6px;width:173px;height:28px;"><span class="t" style="">SfondoSuAntiorigine</span></div>
<div class="" style="left:13.2px;top:1456px;width:1607.2px;height:52.8px;border:2px solid;border-color:#55534e #fbfaf6 #fbfaf6 #77756f;background:#d4d0c8"></div>
<div class="" style="left:9.6px;top:252px;width:4px;height:1206px;background:#f8f7f3"></div>
<div class="" style="left:13.8px;top:556.8px;width:542.8px;height:169.8px;border:2.2px solid #f01818"></div>
<div class="" style="left:13.8px;top:779.6px;width:194.6px;height:58.4px;border:2.2px solid #f01818"></div>
<div class="" style="left:193.4px;top:1012.4px;width:186.4px;height:47.6px;border:2.2px solid #f01818"></div>
<div class="" style="left:13.8px;top:1335.6px;width:544.6px;height:59.2px;border:2.2px solid #f01818"></div>
<div class="" style="left:9.2px;top:1392px;width:67.2px;height:66px;background:#000"></div>
<div class="" style="left:10px;top:1398px;width:60.4px;height:60px;border:2px solid #d8d8d8;background:#000"></div>
<div class="" style="left:10.8px;top:1412.8px;width:59.6px;height:28px;color:#f0f0f0;font-size:30px;text-align:center;line-height:28px"><span style="display:inline-block;transform:scaleX(.8)">F05</span></div>
<div class="" style="left:0px;top:0px;width:2340px;height:3.4px;background:#fff"></div>
<div class="" style="left:0px;top:0px;width:3.8px;height:1468px;background:#fff"></div>
<div class="" style="left:3.8px;top:3.4px;width:5.8px;height:1460px;background:#000"></div>
<div class="" style="left:3.8px;top:3.4px;width:2332px;height:2.4px;background:#000"></div>
<div class="" style="left:2332.8px;top:3.4px;width:3px;height:1460px;background:#000"></div>
<div class="" style="left:3.8px;top:1456px;width:2332px;height:7.4px;background:#000"></div>
<div class="" style="left:2335.8px;top:2px;width:2px;height:1480px;background:#7a7a7a"></div>
<div class="" style="left:2337.6px;top:2px;width:24px;height:1480px;background:#404040"></div>
<div class="" style="left:2.4px;top:1463.4px;width:2360px;height:2.6px;background:#787878"></div>
<div class="" style="left:2.4px;top:1466px;width:2360px;height:24px;background:#404040"></div>
</div></div></body></html>
